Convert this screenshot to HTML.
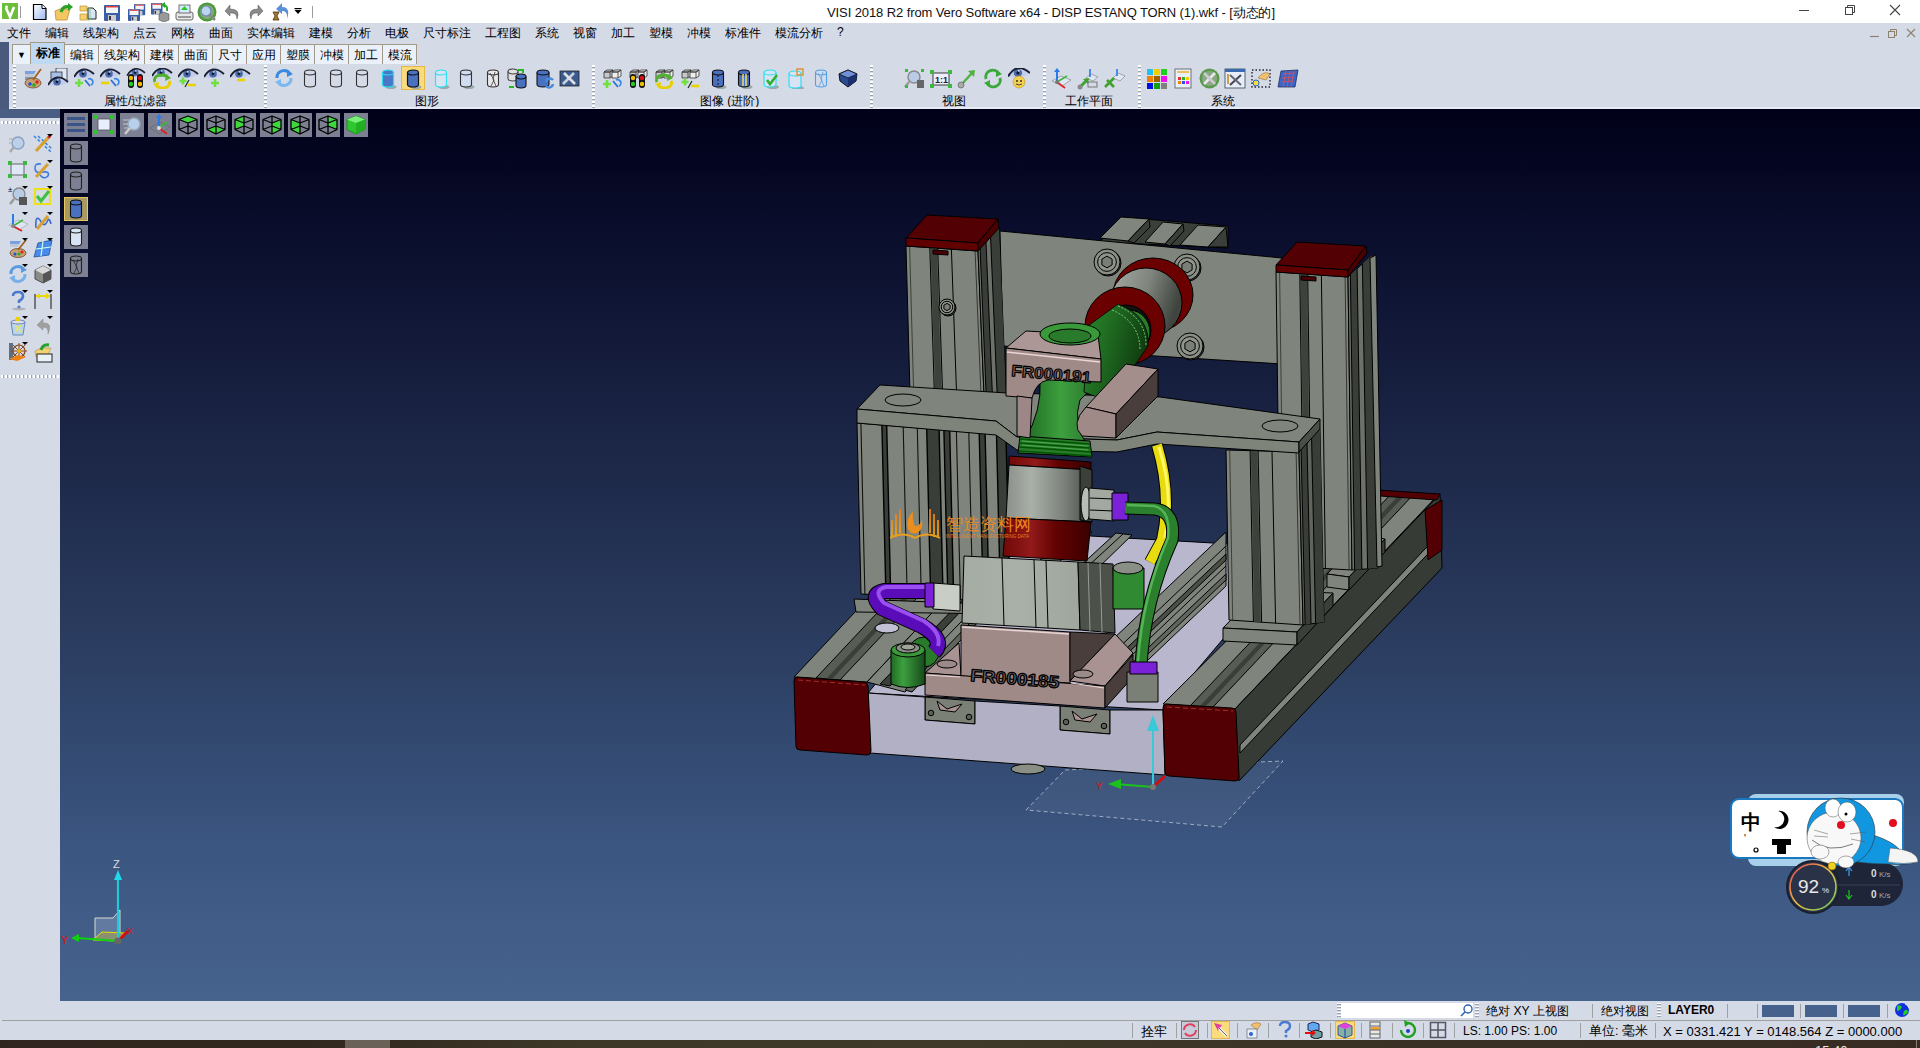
<!DOCTYPE html>
<html><head><meta charset="utf-8">
<style>
*{box-sizing:border-box}
html,body{margin:0;padding:0;width:1920px;height:1048px;overflow:hidden;background:#d5dae7;font-family:"Liberation Sans",sans-serif;color:#000}
.a{position:absolute}
#title{left:0;top:0;width:1920px;height:23px;background:#fff}
#ttext{left:827px;top:4px;font-size:13px;white-space:nowrap;color:#111;letter-spacing:-0.1px}
#menu{left:0;top:23px;width:1920px;height:19px;background:#d5dae7;font-size:12px}
#menu span{position:absolute;top:2px;white-space:nowrap}
#lstrip{left:0;top:42px;width:9px;height:76px;background:#4a5a7c}
#lband{left:0;top:109px;width:60px;height:9px;background:#4a5d82}
#tabs span{position:absolute;top:44px;height:20px;border:1px solid #a09a86;border-bottom:none;background:#eaf1fb;font-size:12px;padding-top:2px;text-align:center;white-space:nowrap}
#tabs span.sel{top:42px;height:22px;background:#bfd9f3;font-weight:bold}
#tb{left:9px;top:64px;width:1911px;height:45px;background:#d5dae7}
.lbl{position:absolute;top:93px;font-size:12px;white-space:nowrap}
.grip{position:absolute;width:3px;background:repeating-linear-gradient(#fff 0 2px,#a9adb8 2px 3px,transparent 3px 5px)}
#vp{left:60px;top:109px;width:1860px;height:892px;background:linear-gradient(#000018 0%,#0b0f2e 15%,#1b2545 37%,#2b3d60 60%,#3a5580 82%,#46638e 100%)}
#lp{left:0;top:118px;width:60px;height:883px;background:#d5dae7}
#sb1{left:0;top:1001px;width:1920px;height:20px;background:#d5dae7}
#sbl{left:2px;top:1020px;width:1918px;height:1px;background:#a0a0a0}
#sb2{left:0;top:1021px;width:1920px;height:19px;background:#d5dae7}
#task{left:0;top:1040px;width:1920px;height:8px;background:linear-gradient(to right,#30261f 0%,#33281f 18%,#3d3828 30%,#3f3a2a 50%,#3a3025 75%,#382c22 100%)}
.vi{position:absolute;width:24px;height:24px;background:#7d8094}
.sep{position:absolute;width:1px;background:#a0a0a0}
.st{position:absolute;font-size:12px;white-space:nowrap}
</style></head><body>
<div class="a" id="title"></div>
<div class="a" id="ttext">VISI 2018 R2 from Vero Software x64 - DISP ESTANQ TORN (1).wkf - [动态的]</div>
<div class="a" id="menu">
<span style="left:7px">文件</span><span style="left:45px">编辑</span><span style="left:83px">线架构</span><span style="left:133px">点云</span><span style="left:171px">网格</span><span style="left:209px">曲面</span><span style="left:247px">实体编辑</span><span style="left:309px">建模</span><span style="left:347px">分析</span><span style="left:385px">电极</span><span style="left:423px">尺寸标注</span><span style="left:485px">工程图</span><span style="left:535px">系统</span><span style="left:573px">视窗</span><span style="left:611px">加工</span><span style="left:649px">塑模</span><span style="left:687px">冲模</span><span style="left:725px">标准件</span><span style="left:775px">模流分析</span><span style="left:837px">?</span>
</div>
<div class="a" id="lstrip"></div>
<div class="a" id="tb"></div>
<div id="tabs">
<span style="left:12px;width:19px;font-size:9px;padding-top:5px">▼</span><span class="sel" style="left:30px;width:35px">标准</span><span style="left:64px;width:35px">编辑</span><span style="left:98px;width:47px">线架构</span><span style="left:144px;width:35px">建模</span><span style="left:178px;width:35px">曲面</span><span style="left:212px;width:35px">尺寸</span><span style="left:246px;width:35px">应用</span><span style="left:280px;width:35px">塑膜</span><span style="left:314px;width:35px">冲模</span><span style="left:348px;width:35px">加工</span><span style="left:382px;width:35px">模流</span>
</div>
<div class="lbl" style="left:104px">属性/过滤器</div>
<div class="lbl" style="left:415px">图形</div>
<div class="lbl" style="left:700px">图像 (进阶)</div>
<div class="lbl" style="left:942px">视图</div>
<div class="lbl" style="left:1065px">工作平面</div>
<div class="lbl" style="left:1211px">系统</div>
<div class="a" id="lband"></div>
<div class="a" style="left:9px;top:107px;width:1911px;height:2px;background:#e6eaf4"></div>
<div class="a" id="vp"></div>
<div class="a" id="lp"></div>
<div class="a" id="sb1"></div>
<div class="a" id="sbl"></div>
<div class="a" id="sb2"></div>
<div class="a" id="task"></div>
<svg class="a" style="left:0;top:0" width="1920" height="1048" viewBox="0 0 1920 1048">
<defs>
<linearGradient id="cylG" x1="0" x2="1" y1="0" y2="0"><stop offset="0" stop-color="#8b918a"/><stop offset="0.3" stop-color="#a9b0a8"/><stop offset="0.7" stop-color="#7a8079"/><stop offset="1" stop-color="#454a44"/></linearGradient>
<linearGradient id="cylR" x1="0" x2="1" y1="0" y2="0"><stop offset="0" stop-color="#700808"/><stop offset="0.32" stop-color="#921a1a"/><stop offset="0.6" stop-color="#620202"/><stop offset="1" stop-color="#3a0000"/></linearGradient>
<linearGradient id="grn" x1="0" x2="1" y1="0" y2="0"><stop offset="0" stop-color="#1f6a21"/><stop offset="0.35" stop-color="#3da03f"/><stop offset="1" stop-color="#17491a"/></linearGradient>
<linearGradient id="valve" x1="0" x2="1" y1="0" y2="0"><stop offset="0" stop-color="#a4aca3"/><stop offset="0.5" stop-color="#a8b0a7"/><stop offset="1" stop-color="#9ea69d"/></linearGradient>
</defs>
<polygon points="1026,810 1065,770 1283,761 1222,827" fill="rgba(255,255,255,0.05)" stroke="#b8c0d0" stroke-width="0.8" stroke-dasharray="4,3"/>
<g stroke="#000" stroke-width="1" stroke-linejoin="round">
<!-- fins -->
<polygon points="1100,242 1121,217 1228,226 1228,248" fill="#3b3f39"/>
<polygon points="1100,238 1121,217 1149,219 1128,241" fill="#80867d"/>
<polygon points="1128,241 1149,219 1150,227 1134,243" fill="#3b3f39"/>
<polygon points="1145,242 1163,222 1183,224 1165,244" fill="#80867d"/>
<polygon points="1165,244 1183,224 1184,231 1170,246" fill="#3b3f39"/>
<polygon points="1180,245 1198,225 1226,227 1208,247" fill="#80867d"/>
<polygon points="1208,247 1226,227 1228,247" fill="#3b3f39"/>
<!-- back plate -->
<polygon points="1000,231 1282,258 1282,364 1156,356 1003,346" fill="#7f857c"/>
<!-- left back post -->
<polygon points="906,246 978,251 984,395 910,393" fill="#7f857c"/>
<polygon points="978,251 999,228 1006,395 984,395" fill="#6c7169"/>
<line x1="909.6" y1="246.2" x2="913.7" y2="393.1" stroke="#2a2e28" stroke-width="0.8"/><polygon points="930.5,247.7 937.0,248.2 941.8,393.9 935.2,393.7" fill="#3e423c" stroke="none"/><line x1="929.8" y1="247.7" x2="934.4" y2="393.7" stroke="#000" stroke-width="1"/><line x1="937.7" y1="248.2" x2="942.6" y2="393.9" stroke="#000" stroke-width="1"/><line x1="951.4" y1="249.2" x2="956.6" y2="394.3" stroke="#000" stroke-width="1"/><line x1="975.1" y1="250.8" x2="981.0" y2="394.9" stroke="#222" stroke-width="0.8"/><polygon points="980.1,248.7 986.0,242.3 992.4,395.0 986.2,395.0" fill="#3a3e38" stroke="none"/><polygon points="990.6,237.2 999.0,228.0 1006.0,395.0 997.2,395.0" fill="#3a3e38" stroke="none"/><line x1="980.1" y1="248.7" x2="986.2" y2="395.0" stroke="#000" stroke-width="1"/><line x1="986.0" y1="242.3" x2="992.4" y2="395.0" stroke="#000" stroke-width="1"/><line x1="990.6" y1="237.2" x2="997.2" y2="395.0" stroke="#000" stroke-width="1"/>
<polygon points="906,238 927,215 998,219 978,243" fill="#520004"/>
<polygon points="933,250 948,251 948,255 933,254" fill="#4a0004"/>
<polygon points="906,238 978,243 978,251 906,246" fill="#600000"/>
<polygon points="978,243 998,219 999,228 978,251" fill="#4a0000"/>
<!-- bolts on back plate -->
<circle cx="1108" cy="263" r="13" fill="#3b3f39"/><circle cx="1107" cy="262" r="13" fill="#8a8f86"/><circle cx="1107" cy="262" r="9.36" fill="#90958c"/><polygon points="1112.1,264.9 1107.0,267.9 1101.9,264.9 1101.9,259.1 1107.0,256.1 1112.1,259.1" fill="#7a7f76"/>
<circle cx="1188" cy="268" r="13" fill="#3b3f39"/><circle cx="1187" cy="267" r="13" fill="#8a8f86"/><circle cx="1187" cy="267" r="9.36" fill="#90958c"/><polygon points="1192.1,269.9 1187.0,272.9 1181.9,269.9 1181.9,264.1 1187.0,261.1 1192.1,264.1" fill="#7a7f76"/>
<circle cx="1191" cy="347" r="13" fill="#3b3f39"/><circle cx="1190" cy="346" r="13" fill="#8a8f86"/><circle cx="1190" cy="346" r="9.36" fill="#90958c"/><polygon points="1195.1,348.9 1190.0,351.9 1184.9,348.9 1184.9,343.1 1190.0,340.1 1195.1,343.1" fill="#7a7f76"/>
<circle cx="948" cy="308" r="8" fill="#3b3f39"/><circle cx="947" cy="307" r="8" fill="#8a8f86"/><circle cx="947" cy="307" r="5.76" fill="#90958c"/><polygon points="950.1,308.8 947.0,310.6 943.9,308.8 943.9,305.2 947.0,303.4 950.1,305.2" fill="#7a7f76"/>
<circle cx="1316" cy="335" r="8" fill="#3b3f39"/><circle cx="1315" cy="334" r="8" fill="#8a8f86"/><circle cx="1315" cy="334" r="5.76" fill="#90958c"/><polygon points="1318.1,335.8 1315.0,337.6 1311.9,335.8 1311.9,332.2 1315.0,330.4 1318.1,332.2" fill="#7a7f76"/>
<!-- cylinder mount -->
<ellipse cx="1153" cy="295" rx="40" ry="37" fill="#6a0000"/>
<defs><linearGradient id="mnt" x1="0" y1="0" x2="1" y2="0.3"><stop offset="0" stop-color="#a6aca4"/><stop offset="0.55" stop-color="#7f857d"/><stop offset="1" stop-color="#3f443e"/></linearGradient></defs>
<ellipse cx="1146" cy="303" rx="36" ry="35" fill="url(#mnt)"/>
<ellipse cx="1125" cy="326" rx="40" ry="39" fill="#6a0000"/>
<ellipse cx="1126" cy="330" rx="25" ry="25" fill="#111"/>
<ellipse cx="1129" cy="332" rx="21" ry="22" fill="#2c7a2c"/>
<!-- base plate lavender top -->
<polygon points="868,693 1003,531 1300,548 1163,710" fill="#b9b7cd"/>
<polygon points="1078,568 1116,533 1132,535 1096,570" fill="#7f857c"/>
<line x1="1086" y1="568" x2="1123" y2="534" stroke="#000"/>
<polygon points="1040,560 1075,530 1092,532 1058,563" fill="#7f857c"/>
<!-- left rail -->
<polygon points="794,677 867,682 960,583 887,578" fill="#7f857c"/>
<polygon points="816,678 840,680 933,581 909,579" fill="#575c54"/>
<polygon points="826,679 832,679 925,580 919,580" fill="#3b3f39" stroke="none"/>
<!-- right rail -->
<polygon points="1163,704 1235,709 1437,496 1378,490" fill="#7f857c"/>
<polygon points="1190,706 1213,707 1413,495 1392,493" fill="#575c54"/>
<polygon points="1200,706 1206,706 1406,494 1400,494" fill="#3b3f39" stroke="none"/>
<polygon points="1235,709 1239,781 1442,568 1440,494" fill="#363b36"/>
<polygon points="1240,745 1441,532 1441,540 1240,753" fill="#7f857c"/>
<polygon points="1378,490 1440,494 1437,500 1380,496" fill="#520004"/>
<polygon points="1425,510 1442,500 1442,550 1428,560" fill="#520004"/>
<polygon points="1327,574 1364,536 1385,539 1349,577" fill="#7f857c"/>
<polygon points="1327,574 1349,577 1349,590 1327,587" fill="#7f857c"/>
<polygon points="1349,577 1385,539 1385,552 1349,590" fill="#3b3f39"/>
<!-- right back post -->
<polygon points="1276,272 1348,277 1352,570 1280,566" fill="#7f857c"/>
<polygon points="1348,277 1372,255 1378,568 1352,570" fill="#6c7169"/>
<line x1="1279.6" y1="272.2" x2="1283.6" y2="566.2" stroke="#2a2e28" stroke-width="0.8"/><polygon points="1300.5,273.7 1307.0,274.1 1311.0,567.7 1304.5,567.4" fill="#3e423c" stroke="none"/><line x1="1299.8" y1="273.6" x2="1303.8" y2="567.3" stroke="#000" stroke-width="1"/><line x1="1307.7" y1="274.2" x2="1311.7" y2="567.8" stroke="#000" stroke-width="1"/><line x1="1321.4" y1="275.1" x2="1325.4" y2="568.5" stroke="#000" stroke-width="1"/><line x1="1345.1" y1="276.8" x2="1349.1" y2="569.8" stroke="#222" stroke-width="0.8"/><polygon points="1350.4,274.8 1357.1,268.6 1361.9,569.2 1354.6,569.8" fill="#3a3e38" stroke="none"/><polygon points="1362.4,263.8 1372.0,255.0 1378.0,568.0 1367.6,568.8" fill="#3a3e38" stroke="none"/><line x1="1350.4" y1="274.8" x2="1354.6" y2="569.8" stroke="#000" stroke-width="1"/><line x1="1357.1" y1="268.6" x2="1361.9" y2="569.2" stroke="#000" stroke-width="1"/><line x1="1362.4" y1="263.8" x2="1367.6" y2="568.8" stroke="#000" stroke-width="1"/>
<polygon points="1370,258 1376,255 1382,566 1377,567" fill="#7f857c"/>
<polygon points="1276,265 1297,242 1366,246 1348,270" fill="#520004"/>
<polygon points="1301,276 1316,277 1316,281 1301,280" fill="#4a0004"/>
<polygon points="1276,265 1348,270 1348,277 1276,272" fill="#600000"/>
<polygon points="1348,270 1366,246 1367,253 1348,277" fill="#4a0000"/>
<polygon points="1223,628 1260,590 1333,593 1297,632" fill="#7f857c"/>
<polygon points="1223,628 1297,632 1297,645 1223,641" fill="#7f857c"/>
<polygon points="1297,632 1333,593 1333,606 1297,645" fill="#3b3f39"/>
<!-- right inner rail -->
<polygon points="1110,642 1226,532 1226,586 1110,696" fill="#7f857c"/>
<line x1="1110" y1="656" x2="1226" y2="546" stroke="#000"/>
<polygon points="1110,664 1226,554 1226,560 1110,670" fill="#4a4f48"/>
<line x1="1110" y1="676" x2="1226" y2="566" stroke="#000"/>
<polygon points="1110,684 1226,574 1226,580 1110,690" fill="#60655d"/>
<!-- left inner area rails -->
<polygon points="867,682 960,583 1012,590 905,692" fill="#7f857c"/>
<polygon points="880,684 972,590 980,591 890,686" fill="#3b3f39"/>
<line x1="898" y1="687" x2="990" y2="592" stroke="#000"/>
<polygon points="905,690 1000,592 1006,592 912,692" fill="#60655d"/>
<ellipse cx="887" cy="628" rx="12" ry="5" fill="#c2c0d4"/>
<!-- left lower posts -->
<polygon points="857,423 1006,435 1010,602 861,594" fill="#7f857c"/>
<polygon points="881.9,425.0 886.7,425.4 890.7,595.6 885.9,595.3" fill="#3a3e38" stroke="none"/><line x1="881.9" y1="425.0" x2="885.9" y2="595.3" stroke="#000" stroke-width="1.4"/><line x1="886.7" y1="425.4" x2="890.7" y2="595.6" stroke="#000" stroke-width="1.4"/><polygon points="926.7,428.6 939.1,429.6 943.1,598.4 930.7,597.7" fill="#3a3e38" stroke="none"/><line x1="926.7" y1="428.6" x2="930.7" y2="597.7" stroke="#000" stroke-width="1.4"/><line x1="939.1" y1="429.6" x2="943.1" y2="598.4" stroke="#000" stroke-width="1.4"/><polygon points="943.9,430.0 949.7,430.5 953.7,599.0 947.9,598.7" fill="#3a3e38" stroke="none"/><line x1="943.9" y1="430.0" x2="947.9" y2="598.7" stroke="#000" stroke-width="1.4"/><line x1="949.7" y1="430.5" x2="953.7" y2="599.0" stroke="#000" stroke-width="1.4"/><polygon points="979.2,432.8 985.1,433.3 989.1,600.9 983.2,600.6" fill="#3a3e38" stroke="none"/><line x1="979.2" y1="432.8" x2="983.2" y2="600.6" stroke="#000" stroke-width="1.4"/><line x1="985.1" y1="433.3" x2="989.1" y2="600.9" stroke="#000" stroke-width="1.4"/><polygon points="996.5,434.2 1006.0,435.0 1010.0,602.0 1000.5,601.5" fill="#3a3e38" stroke="none"/><line x1="996.5" y1="434.2" x2="1000.5" y2="601.5" stroke="#000" stroke-width="1.4"/><line x1="1006.0" y1="435.0" x2="1010.0" y2="602.0" stroke="#000" stroke-width="1.4"/><line x1="860.9" y1="423.3" x2="864.9" y2="594.2" stroke="#111" stroke-width="1.1"/><line x1="903.2" y1="426.7" x2="907.2" y2="596.5" stroke="#111" stroke-width="1.1"/><line x1="917.3" y1="427.9" x2="921.3" y2="597.2" stroke="#111" stroke-width="1.1"/><line x1="956.4" y1="431.0" x2="960.4" y2="599.3" stroke="#111" stroke-width="1.1"/><line x1="968.8" y1="432.0" x2="972.8" y2="600.0" stroke="#111" stroke-width="1.1"/>
<polygon points="854,599 1010,605 1012,614 856,612" fill="#7f857c"/>
<!-- right lower post -->
<polygon points="1226,450 1299,452 1303,625 1229,620" fill="#7f857c"/>
<polygon points="1299,452 1320,429 1324,622 1303,625" fill="#5f645c"/>
<line x1="1229.7" y1="450.1" x2="1232.7" y2="620.2" stroke="#2a2e28" stroke-width="0.8"/><polygon points="1250.8,450.7 1257.4,450.9 1260.8,622.1 1254.2,621.7" fill="#3e423c" stroke="none"/><line x1="1250.1" y1="450.7" x2="1253.4" y2="621.6" stroke="#000" stroke-width="1"/><line x1="1258.1" y1="450.9" x2="1261.6" y2="622.2" stroke="#000" stroke-width="1"/><line x1="1272.0" y1="451.3" x2="1275.6" y2="623.1" stroke="#000" stroke-width="1"/><line x1="1296.1" y1="451.9" x2="1300.0" y2="624.8" stroke="#222" stroke-width="0.8"/><polygon points="1301.1,449.7 1307.0,443.3 1311.0,623.9 1305.1,624.7" fill="#3a3e38" stroke="none"/><polygon points="1311.6,438.2 1320.0,429.0 1324.0,622.0 1315.6,623.2" fill="#3a3e38" stroke="none"/><line x1="1301.1" y1="449.7" x2="1305.1" y2="624.7" stroke="#000" stroke-width="1"/><line x1="1307.0" y1="443.3" x2="1311.0" y2="623.9" stroke="#000" stroke-width="1"/><line x1="1311.6" y1="438.2" x2="1315.6" y2="623.2" stroke="#000" stroke-width="1"/>

<!-- middle plate -->
<polygon points="857,409 880,385 1007,393 1160,397 1320,419 1299,442 1157,432 1117,440 1017,437 996,421" fill="#7f857c"/>
<polygon points="857,409 996,421 1017,437 1117,440 1157,432 1299,442 1299,453 1157,444 1117,452 1017,450 996,435 857,423" fill="#7f847b"/>
<polygon points="1299,442 1320,419 1320,429 1299,452" fill="#4a4f48"/>
<ellipse cx="903" cy="400" rx="18" ry="6" fill="none"/>
<ellipse cx="1280" cy="426" rx="18" ry="6" fill="none"/>
<!-- green pipe body -->
<path d="M1040,380 Q1042,410 1025,440 L1088,446 Q1072,425 1080,400 L1128,352 L1112,318 L1075,345 Z" fill="url(#grn)"/>
<defs><linearGradient id="grn2" x1="0" x2="1" y1="0" y2="0.4"><stop offset="0" stop-color="#2a8a2c"/><stop offset="0.45" stop-color="#1f6a21"/><stop offset="1" stop-color="#0f3a10"/></linearGradient></defs>
<path d="M1088,326 L1118,304 Q1150,316 1148,346 L1110,402 L1084,392 Z" fill="url(#grn2)" stroke="#000" stroke-width="0.8"/>
<path d="M1118,306 Q1146,318 1146,345" fill="none" stroke="#7ad07a" stroke-width="1" stroke-dasharray="2,1.5"/>
<path d="M1112,310 Q1140,322 1140,350" fill="none" stroke="#7ad07a" stroke-width="1" stroke-dasharray="2,1.5"/>
<polygon points="1020,436 1090,441 1092,457 1018,453" fill="#2a7a2c"/>
<path d="M1020,439 L1090,444 M1019,443 L1091,448 M1019,447 L1091,452 M1019,451 L1092,456" stroke="#050" stroke-width="1.6"/>
<path d="M1022,441 L1088,446 M1022,445 L1088,450" stroke="#5ab85a" stroke-width="0.8"/>
<!-- pink block 1 -->
<polygon points="1006,348 1026,331 1098,335 1101,359" fill="#ad9796"/>
<path d="M1006,348 L1101,359 L1101,382 L1048,380 Q1036,382 1032,398 L1006,396 Z" fill="#9f8a88"/>
<polygon points="1017,396 1032,398 1030,438 1017,436" fill="#9c8786"/>
<line x1="1007" y1="352" x2="1100" y2="362" stroke="#e8d6d6" stroke-width="1.5"/>
<text x="1011" y="376" font-family="Liberation Sans" font-weight="bold" font-size="16" fill="#7a6666" stroke="#000" stroke-width="1.1" transform="rotate(5 1011 376)" textLength="80" lengthAdjust="spacingAndGlyphs">FR000191</text>
<!-- green ring top -->
<ellipse cx="1070" cy="334" rx="30" ry="11" fill="#3a9a3a"/>
<ellipse cx="1070" cy="336" rx="21" ry="7" fill="#2a7a2c"/>
<!-- pink block 2 (slanted) -->
<polygon points="1086,407 1126,364 1158,369 1116,414" fill="#a38e8c"/>
<path d="M1086,407 L1116,414 L1116,438 L1082,436 Q1070,424 1086,407Z" fill="#9f8a88"/>
<polygon points="1116,414 1158,369 1158,396 1116,438" fill="#4a3e3c"/>
<!-- cylinder red/grey -->
<polygon points="1009,456 1091,462 1091,470 1009,465" fill="url(#cylR)"/>
<polygon points="1009,465 1091,470 1091,522 1006,518" fill="url(#cylG)"/>
<polygon points="1006,518 1091,522 1087,561 1003,556" fill="url(#cylR)"/>
<!-- valve body -->
<polygon points="964,556 1078,562 1080,630 962,623" fill="url(#valve)"/>
<polygon points="1078,562 1113,564 1115,633 1080,630" fill="#4c5149"/>
<line x1="1002" y1="558" x2="1004" y2="626"/><line x1="1034" y1="560" x2="1036" y2="628"/><line x1="1046" y1="560" x2="1048" y2="628"/>
<line x1="1088" y1="563" x2="1090" y2="631" stroke="#999"/><line x1="1100" y1="563" x2="1102" y2="632" stroke="#999"/>
<!-- right fitting on cylinder -->
<polygon points="1080,466 1092,470 1092,522 1080,520" fill="#3b403a"/>
<ellipse cx="1086" cy="504" rx="5" ry="17" fill="#b8bdb6"/>
<polygon points="1089,488 1114,490 1114,521 1089,519" fill="#a3a9a1"/>
<line x1="1090" y1="498" x2="1114" y2="499" stroke="#000"/><line x1="1090" y1="510" x2="1114" y2="511" stroke="#000"/>
<rect x="1112" y="493" width="16" height="27" fill="#7b22d8"/>
<!-- yellow tube -->
<path d="M1157,445 Q1172,495 1162,540 L1150,562" fill="none" stroke="#000" stroke-width="12"/>
<path d="M1157,445 Q1172,495 1162,540 L1150,562" fill="none" stroke="#e8dc10" stroke-width="10"/>
<path d="M1159,447 Q1174,495 1165,538" fill="none" stroke="#fff860" stroke-width="3"/>
<!-- green fitting right -->
<polygon points="1113,568 1144,568 1144,609 1113,609" fill="#2f8a31"/>
<ellipse cx="1128" cy="568" rx="15" ry="6" fill="#8a8f86"/>
<!-- green tube -->
<path d="M1125,508 L1155,509 Q1176,512 1172,540 Q1145,600 1141,665" fill="none" stroke="#000" stroke-width="13"/>
<path d="M1125,508 L1155,509 Q1176,512 1172,540 Q1145,600 1141,665" fill="none" stroke="#2a802c" stroke-width="11"/>
<path d="M1127,505 L1154,506 Q1171,510 1168,538 Q1142,598 1138,662" fill="none" stroke="#55b455" stroke-width="2.5"/>
<!-- lower pink block -->
<polygon points="925,673 959,643 961,676" fill="#a99392"/>
<polygon points="961,625 1070,632 1070,683 961,676" fill="#9f8a88"/>
<polygon points="1070,632 1115,634 1070,681" fill="#4a3e3c"/>
<polygon points="1070,681 1115,634 1133,653 1105,686" fill="#a99392"/>
<polygon points="925,673 1105,686 1105,708 925,695" fill="#9f8a88"/>
<polygon points="1105,686 1133,655 1133,677 1105,708" fill="#4a3e3c"/>
<text x="970" y="681" font-family="Liberation Sans" font-weight="bold" font-size="17" fill="#7a6666" stroke="#000" stroke-width="1.2" transform="rotate(4.5 970 681)" textLength="89" lengthAdjust="spacingAndGlyphs">FR000185</text>
<line x1="962" y1="627" x2="1069" y2="634" stroke="#e8d6d6" stroke-width="1.5"/>
<line x1="926" y1="675" x2="960" y2="677" stroke="#e8d6d6" stroke-width="1.2"/>
<line x1="1071" y1="683" x2="1104" y2="688" stroke="#e8d6d6" stroke-width="1.2"/>
<ellipse cx="947" cy="664" rx="10" ry="4" fill="#9a8a8a"/><ellipse cx="1083" cy="674" rx="10" ry="4" fill="#9a8a8a"/>
<!-- brackets -->
<polygon points="925,697 975,701 975,724 925,720" fill="#7b8077"/>
<polygon points="937,701 947,709 962,704 955,712 940,710" fill="#a99392"/>
<circle cx="931" cy="713" r="2.8" fill="#5a5f57"/><circle cx="969" cy="717" r="2.8" fill="#5a5f57"/>
<polygon points="1060,706 1110,710 1110,734 1060,730" fill="#7b8077"/>
<polygon points="1072,711 1082,719 1097,714 1090,722 1075,720" fill="#a99392"/>
<circle cx="1066" cy="722" r="2.8" fill="#5a5f57"/><circle cx="1104" cy="726" r="2.8" fill="#5a5f57"/>
<!-- left green elbow + purple tube -->
<ellipse cx="924" cy="652" rx="15" ry="15" fill="#2a7a2c"/>
<path d="M891,650 L925,650 L925,684 Q908,691 891,684 Z" fill="url(#grn)"/>
<ellipse cx="908" cy="650" rx="17" ry="7" fill="#3a9a3a"/>
<ellipse cx="908" cy="648" rx="12" ry="5" fill="#8a8f86"/>
<ellipse cx="908" cy="647" rx="7" ry="3" fill="#a0a59c"/>
<path d="M930,591 L885,591 Q868,594 882,608 L922,626 Q946,640 934,652" fill="none" stroke="#000" stroke-width="16"/>
<path d="M930,591 L885,591 Q868,594 882,608 L922,626 Q946,640 934,652" fill="none" stroke="#5a0cb8" stroke-width="14"/>
<path d="M928,587 L886,587 Q872,590 884,603 L924,621 Q942,633 938,646" fill="none" stroke="#9a50f0" stroke-width="4"/>
<polygon points="933,583 960,585 960,611 933,609" fill="#c8cdc6"/>
<rect x="925" y="583" width="9" height="24" fill="#7b22d8"/>
<!-- right nut bottom -->
<polygon points="1127,672 1158,672 1158,702 1127,702" fill="#7b8077"/>
<rect x="1130" y="662" width="27" height="12" fill="#7b22d8"/>
<!-- lavender front face -->
<polygon points="868,693 925,697 925,720 975,724 975,701 1060,706 1060,730 1110,734 1110,710 1163,710 1165,775 870,753" fill="#b1b0c4"/>
<ellipse cx="1028" cy="769" rx="17" ry="5" fill="#8a8f86"/>
<!-- right red cap -->
<path d="M1166,704 L1232,708 Q1236,708 1236,712 L1239,777 Q1239,781 1235,781 L1169,776 Q1165,776 1165,772 L1163,708 Q1163,704 1166,704Z" fill="#520004"/>
<line x1="1167" y1="707" x2="1233" y2="711" stroke="#a03030" stroke-width="1" stroke-dasharray="5,3"/>
<!-- left red cap -->
<path d="M797,677 L864,682 Q868,682 868,686 L871,751 Q871,755 867,755 L800,750 Q796,750 796,746 L794,681 Q794,677 797,677Z" fill="#520004"/>
<line x1="798" y1="680" x2="865" y2="685" stroke="#a03030" stroke-width="1" stroke-dasharray="5,3"/>
</g>
<!-- dashed plane + axes -->
<line x1="1153" y1="787" x2="1153" y2="725" stroke="#38c8d8" stroke-width="2"/>
<polygon points="1147,731 1153,715 1159,731" fill="#38c8d8"/>
<line x1="1153" y1="787" x2="1115" y2="784" stroke="#1cc21c" stroke-width="2"/>
<polygon points="1121,779 1108,784 1121,789" fill="#1cc21c"/>
<line x1="1153" y1="787" x2="1165" y2="776" stroke="#d01010" stroke-width="3"/>
<circle cx="1153" cy="787" r="3" fill="#777"/>
<text x="1096" y="790" font-size="10" font-family="Liberation Sans" fill="#e01010">Y</text>
<g opacity="0.95">
<defs><linearGradient id="og" x1="0" y1="0" x2="0" y2="1"><stop offset="0" stop-color="#f07818"/><stop offset="1" stop-color="#f0a818"/></linearGradient></defs>
<path d="M892,537 V520 M896,537 V514 M900,533 V509 M930,533 V509 M934,537 V514 M938,537 V520" stroke="url(#og)" stroke-width="1.8" fill="none"/>
<path d="M890,538 Q903,531 915,538 Q927,531 940,538" stroke="#f0a018" stroke-width="1.8" fill="none"/>
<path d="M913,511 Q905,520 908,529 Q911,535 917,533 Q924,529 922,520 Q919,527 915,526 Q912,520 913,511Z" fill="#f09018"/>
<text x="946" y="530" font-size="17" fill="#f08a20" font-family="Liberation Sans">智造资料网</text>
<text x="946" y="538" font-size="4.6" fill="#f08a20" font-family="Liberation Sans" textLength="83" lengthAdjust="spacingAndGlyphs">INTELLIGENT MANUFACTURING DATA</text>
</g>
</svg>

<svg class="a" style="left:2px;top:3px" width="17" height="17" viewBox="0 0 17 17"><rect x="0" y="0" width="16" height="16" fill="#6cbd3c"/><path d="M4,5 L8,14 L12,4" fill="none" stroke="#fff" stroke-width="2.6"/><circle cx="4.5" cy="4" r="1.4" fill="#fff"/></svg>
<div class="a" style="left:20px;top:6px;width:1px;height:12px;background:#9a9a9a"></div>
<svg class="a" style="left:32px;top:3px" width="16" height="18" viewBox="0 0 16 18"><path d="M1.5,1.5 H10 L14,5.5 V16.5 H1.5Z" fill="url(#pg)" stroke="#000" stroke-width="1.2"/><path d="M10,1.5 V5.5 H14" fill="#fff" stroke="#000"/><defs><linearGradient id="pg" x1="0" y1="0" x2="1" y2="1"><stop offset="0" stop-color="#fff"/><stop offset="1" stop-color="#9ab8f0"/></linearGradient></defs></svg>
<svg class="a" style="left:54px;top:3px" width="20" height="19" viewBox="0 0 20 19"><path d="M1,8 L6,6 H16 L13,17 H2Z" fill="#f3c863" stroke="#c09030" stroke-width="0.8"/><path d="M7,9 Q9,2 16,4" fill="none" stroke="#2aa02a" stroke-width="3.2"/><polygon points="14,0 19,4 14,8" fill="#2aa02a"/></svg>
<svg class="a" style="left:79px;top:3px" width="19" height="19" viewBox="0 0 19 19"><path d="M1,3 H8 V8 H1Z M1,11 H8 V17 H1Z" fill="#f3d070" stroke="#c8a040" stroke-width="0.8"/><path d="M9,5 H14 L17,8 V16 H9Z" fill="#d8e4f8" stroke="#222" stroke-width="1"/><path d="M8,5 H11 V17 H8" fill="none" stroke="#6c6" stroke-width="0.8"/></svg>
<svg class="a" style="left:103px;top:4px" width="18" height="18" viewBox="0 0 18 18"><g transform="translate(1,1) scale(1)"><rect x="0" y="0" width="16" height="16" rx="1" fill="#3b5ea8"/><rect x="2" y="1" width="12" height="7" fill="#f4f4f4"/><rect x="2" y="1" width="12" height="1.5" fill="#e04040"/><rect x="4" y="10" width="8" height="6" fill="#ccc"/><rect x="5" y="11" width="2" height="4" fill="#334"/></g></svg>
<svg class="a" style="left:127px;top:3px" width="19" height="19" viewBox="0 0 19 19"><g transform="translate(7,1) scale(0.7)"><rect x="0" y="0" width="16" height="16" rx="1" fill="#3b5ea8"/><rect x="2" y="1" width="12" height="7" fill="#f4f4f4"/><rect x="2" y="1" width="12" height="1.5" fill="#e04040"/><rect x="4" y="10" width="8" height="6" fill="#ccc"/><rect x="5" y="11" width="2" height="4" fill="#334"/></g><g transform="translate(1,6) scale(0.75)"><rect x="0" y="0" width="16" height="16" rx="1" fill="#3b5ea8"/><rect x="2" y="1" width="12" height="7" fill="#f4f4f4"/><rect x="2" y="1" width="12" height="1.5" fill="#e04040"/><rect x="4" y="10" width="8" height="6" fill="#ccc"/><rect x="5" y="11" width="2" height="4" fill="#334"/></g></svg>
<svg class="a" style="left:150px;top:2px" width="20" height="20" viewBox="0 0 20 20"><g transform="translate(1,1) scale(0.72)"><rect x="0" y="0" width="16" height="16" rx="1" fill="#3b5ea8"/><rect x="2" y="1" width="12" height="7" fill="#f4f4f4"/><rect x="2" y="1" width="12" height="1.5" fill="#e04040"/><rect x="4" y="10" width="8" height="6" fill="#ccc"/><rect x="5" y="11" width="2" height="4" fill="#334"/></g><path d="M13,3 Q18,3 17,9" fill="none" stroke="#2a2" stroke-width="2"/><polygon points="11,3 15,0 15,6" fill="#2a2"/><path d="M9,12 L14,10 L19,12 V18 L14,20 L9,18Z" fill="#999" stroke="#555" stroke-width="0.6"/></svg>
<svg class="a" style="left:175px;top:4px" width="19" height="18" viewBox="0 0 19 18"><rect x="1" y="8" width="17" height="8" rx="2" fill="#e8e8e8" stroke="#666"/><rect x="4" y="1" width="11" height="8" fill="#d8e8ff" stroke="#555" stroke-width="0.8"/><polygon points="9.5,2 13,6 6,6" fill="#2c2"/><rect x="3" y="12" width="13" height="2" fill="#999"/></svg>
<svg class="a" style="left:197px;top:2px" width="21" height="21" viewBox="0 0 21 21"><circle cx="10" cy="10" r="9.5" fill="#4f9a3a"/><circle cx="10" cy="10" r="7" fill="#86aa80"/><circle cx="9" cy="9" r="5" fill="#bcd4f0" stroke="#6a8ab0" stroke-width="1.2"/><path d="M12.5,12.5 L18,18" stroke="#888" stroke-width="2.5"/></svg>
<svg class="a" style="left:224px;top:3px" width="17" height="18" viewBox="0 0 17 18"><path d="M6,2 L1,8 L6,13 V10 Q13,9 13,16 Q17,6 6,6Z" fill="#8a8a8a" stroke="#666" stroke-width="0.6"/></svg>
<svg class="a" style="left:247px;top:3px" width="17" height="18" viewBox="0 0 17 18"><path d="M11,2 L16,8 L11,13 V10 Q4,9 4,16 Q0,6 11,6Z" fill="#8a8a8a" stroke="#666" stroke-width="0.6"/></svg>
<svg class="a" style="left:270px;top:2px" width="20" height="21" viewBox="0 0 20 21"><path d="M12,1 L6,7 L12,12 V9 Q18,9 17,17 Q21,5 12,5Z" fill="#5a90d8"/><path d="M3,10 H9 L7,14 L9,18 H3 L5,14Z" fill="#a07a30" stroke="#503010" stroke-width="0.8"/></svg>
<svg class="a" style="left:294px;top:8px" width="9" height="6" viewBox="0 0 9 6"><rect x="0.5" y="0" width="7" height="1.2" fill="#000"/><polygon points="0.5,2 7.5,2 4,6" fill="#000"/></svg>
<div class="a" style="left:312px;top:6px;width:1px;height:12px;background:#9a9a9a"></div>
<svg class="a" style="left:1794px;top:0px" width="20" height="20" viewBox="0 0 20 20"><line x1="5" y1="10.5" x2="15" y2="10.5" stroke="#444" stroke-width="1"/></svg>
<svg class="a" style="left:1840px;top:0px" width="20" height="20" viewBox="0 0 20 20"><rect x="5.5" y="7.5" width="7" height="7" fill="none" stroke="#444"/><path d="M7.5,7.5 V5.5 H14.5 V12.5 H12.5" fill="none" stroke="#444"/></svg>
<svg class="a" style="left:1885px;top:0px" width="20" height="20" viewBox="0 0 20 20"><path d="M5,5 L15,15 M15,5 L5,15" stroke="#444" stroke-width="1.1"/></svg>
<svg class="a" style="left:1868px;top:26px" width="14" height="14" viewBox="0 0 14 14"><line x1="2" y1="10.5" x2="11" y2="10.5" stroke="#8c826e" stroke-width="1.2"/></svg>
<svg class="a" style="left:1886px;top:26px" width="14" height="14" viewBox="0 0 14 14"><rect x="2.5" y="5.5" width="6" height="6" fill="none" stroke="#8c826e"/><path d="M4.5,5.5 V3.5 H10.5 V9.5 H8.5" fill="none" stroke="#8c826e"/></svg>
<svg class="a" style="left:1904px;top:26px" width="14" height="14" viewBox="0 0 14 14"><path d="M3,3 L11,11 M11,3 L3,11" stroke="#8c826e" stroke-width="1.1"/></svg>
<div class="a" style="left:13px;top:65px;width:3px;height:43px;background:repeating-linear-gradient(to bottom,#fff 0 2px,#9aa0ad 2px 3px,transparent 3px 4px)"></div>
<div class="a" style="left:264px;top:65px;width:3px;height:43px;background:repeating-linear-gradient(to bottom,#fff 0 2px,#9aa0ad 2px 3px,transparent 3px 4px)"></div>
<div class="a" style="left:592px;top:65px;width:3px;height:43px;background:repeating-linear-gradient(to bottom,#fff 0 2px,#9aa0ad 2px 3px,transparent 3px 4px)"></div>
<div class="a" style="left:870px;top:65px;width:3px;height:43px;background:repeating-linear-gradient(to bottom,#fff 0 2px,#9aa0ad 2px 3px,transparent 3px 4px)"></div>
<div class="a" style="left:1043px;top:65px;width:3px;height:43px;background:repeating-linear-gradient(to bottom,#fff 0 2px,#9aa0ad 2px 3px,transparent 3px 4px)"></div>
<div class="a" style="left:1138px;top:65px;width:3px;height:43px;background:repeating-linear-gradient(to bottom,#fff 0 2px,#9aa0ad 2px 3px,transparent 3px 4px)"></div>
<svg class="a" style="left:23px;top:68px" width="20" height="21" viewBox="0 0 20 21"><path d="M2,3 H13 L11,6 H2Z" fill="#7aa0e0"/><path d="M2,6 H12 L10,9 H2Z" fill="#c0c8d8"/><path d="M2,9 H11 V12 H2Z" fill="#9098a8"/><ellipse cx="10" cy="15" rx="8" ry="5" fill="#c8a070" stroke="#6a4a2a" stroke-width="0.8"/><circle cx="7" cy="16" r="1.8" fill="#2050e0"/><circle cx="11" cy="17" r="1.8" fill="#20b020"/><circle cx="14" cy="14" r="1.8" fill="#e02020"/><path d="M10,12 L18,1" stroke="#a06020" stroke-width="1.8"/></svg>
<svg class="a" style="left:48px;top:68px" width="21" height="21" viewBox="0 0 21 21"><rect x="8" y="0" width="11" height="14" fill="#dde8f8" stroke="#333" stroke-width="0.8"/><rect x="3" y="4" width="11" height="12" fill="#a8c0e8" stroke="#333" stroke-width="0.8"/><path d="M0.0,17.0 Q8.0,4.0 20.0,14.0 Q12.0,20.0 0.0,17.0Z" fill="#c4ccec"/><circle cx="9.0" cy="13.8" r="3.8" fill="#4a6aa8"/><circle cx="9.0" cy="13.8" r="1.4" fill="#10182a"/><circle cx="9.8" cy="11.8" r="0.9" fill="#cde"/><path d="M0.0,17.0 Q8.0,3.5 20.0,14.0" fill="none" stroke="#1a2030" stroke-width="1.8"/></svg>
<svg class="a" style="left:74px;top:68px" width="21" height="21" viewBox="0 0 21 21"><path d="M0.0,9.0 Q8.0,-4.0 20.0,6.0 Q12.0,12.0 0.0,9.0Z" fill="#c4ccec"/><circle cx="9.0" cy="5.8" r="3.8" fill="#4a6aa8"/><circle cx="9.0" cy="5.8" r="1.4" fill="#10182a"/><circle cx="9.8" cy="3.8" r="0.9" fill="#cde"/><path d="M0.0,9.0 Q8.0,-4.5 20.0,6.0" fill="none" stroke="#1a2030" stroke-width="1.8"/><path d="M1,15 H9 M5,11 V19" stroke="#70e040" stroke-width="2.6"/><path d="M11,12 L16,18" stroke="#2a70d8" stroke-width="1.8"/><path d="M14,11 A3.2,3.2 0 1 1 17,17" fill="none" stroke="#3a88e8" stroke-width="1.8"/></svg>
<svg class="a" style="left:100px;top:68px" width="21" height="21" viewBox="0 0 21 21"><path d="M0.0,9.0 Q8.0,-4.0 20.0,6.0 Q12.0,12.0 0.0,9.0Z" fill="#c4ccec"/><circle cx="9.0" cy="5.8" r="3.8" fill="#4a6aa8"/><circle cx="9.0" cy="5.8" r="1.4" fill="#10182a"/><circle cx="9.8" cy="3.8" r="0.9" fill="#cde"/><path d="M0.0,9.0 Q8.0,-4.5 20.0,6.0" fill="none" stroke="#1a2030" stroke-width="1.8"/><path d="M1,15 H9" stroke="#e8d400" stroke-width="2.6"/><path d="M11,12 L16,18" stroke="#2a70d8" stroke-width="1.8"/><path d="M14,11 A3.2,3.2 0 1 1 17,17" fill="none" stroke="#3a88e8" stroke-width="1.8"/></svg>
<svg class="a" style="left:126px;top:68px" width="21" height="21" viewBox="0 0 21 21"><path d="M1.0,7.6 Q8.2,-4.1 19.0,4.9 Q11.8,10.3 1.0,7.6Z" fill="#c4ccec"/><circle cx="9.1" cy="4.72" r="3.42" fill="#4a6aa8"/><circle cx="9.1" cy="4.72" r="1.26" fill="#10182a"/><circle cx="9.82" cy="2.92" r="0.81" fill="#cde"/><path d="M1.0,7.6 Q8.2,-4.550000000000001 19.0,4.9" fill="none" stroke="#1a2030" stroke-width="1.62"/><rect x="2" y="6" width="6" height="14" rx="3" fill="#111"/><circle cx="5" cy="10" r="2.2" fill="#f0c000"/><circle cx="5" cy="16" r="2.2" fill="#20d020"/><rect x="11" y="6" width="6" height="14" rx="3" fill="#111"/><circle cx="14" cy="10" r="2.2" fill="#e01010"/><circle cx="14" cy="16" r="2.2" fill="#f0c000"/></svg>
<svg class="a" style="left:152px;top:68px" width="21" height="21" viewBox="0 0 21 21"><path d="M0.0,8.0 Q8.0,-5.0 20.0,5.0 Q12.0,11.0 0.0,8.0Z" fill="#c4ccec"/><circle cx="9.0" cy="4.8" r="3.8" fill="#4a6aa8"/><circle cx="9.0" cy="4.8" r="1.4" fill="#10182a"/><circle cx="9.8" cy="2.8" r="0.9" fill="#cde"/><path d="M0.0,8.0 Q8.0,-5.5 20.0,5.0" fill="none" stroke="#1a2030" stroke-width="1.8"/><path d="M3,14 A7,5 0 0 1 16,10" fill="none" stroke="#50b030" stroke-width="3"/><polygon points="14,6 19,10 13,13" fill="#50b030"/><path d="M17,13 A7,5 0 0 1 4,17" fill="none" stroke="#e8d000" stroke-width="3"/><polygon points="6,20 1,16 7,14" fill="#e8d000"/></svg>
<svg class="a" style="left:178px;top:68px" width="21" height="21" viewBox="0 0 21 21"><path d="M0.0,9.0 Q8.0,-4.0 20.0,6.0 Q12.0,12.0 0.0,9.0Z" fill="#c4ccec"/><circle cx="9.0" cy="5.8" r="3.8" fill="#4a6aa8"/><circle cx="9.0" cy="5.8" r="1.4" fill="#10182a"/><circle cx="9.8" cy="3.8" r="0.9" fill="#cde"/><path d="M0.0,9.0 Q8.0,-4.5 20.0,6.0" fill="none" stroke="#1a2030" stroke-width="1.8"/><path d="M1.5,13 H8.5 M5,9.5 V16.5" stroke="#70e040" stroke-width="2.6"/><path d="M7,19 L11,12" stroke="#222" stroke-width="1.2"/><path d="M10,17 H18" stroke="#e8d400" stroke-width="2.6"/></svg>
<svg class="a" style="left:204px;top:68px" width="21" height="21" viewBox="0 0 21 21"><path d="M0.0,9.0 Q8.0,-4.0 20.0,6.0 Q12.0,12.0 0.0,9.0Z" fill="#c4ccec"/><circle cx="9.0" cy="5.8" r="3.8" fill="#4a6aa8"/><circle cx="9.0" cy="5.8" r="1.4" fill="#10182a"/><circle cx="9.8" cy="3.8" r="0.9" fill="#cde"/><path d="M0.0,9.0 Q8.0,-4.5 20.0,6.0" fill="none" stroke="#1a2030" stroke-width="1.8"/><path d="M7,15 H15 M11,11 V19" stroke="#70e040" stroke-width="2.6"/></svg>
<svg class="a" style="left:230px;top:68px" width="21" height="21" viewBox="0 0 21 21"><path d="M0.0,9.0 Q8.0,-4.0 20.0,6.0 Q12.0,12.0 0.0,9.0Z" fill="#c4ccec"/><circle cx="9.0" cy="5.8" r="3.8" fill="#4a6aa8"/><circle cx="9.0" cy="5.8" r="1.4" fill="#10182a"/><circle cx="9.8" cy="3.8" r="0.9" fill="#cde"/><path d="M0.0,9.0 Q8.0,-4.5 20.0,6.0" fill="none" stroke="#1a2030" stroke-width="1.8"/><path d="M7,12 H15" stroke="#e8d400" stroke-width="2.6"/></svg>
<svg class="a" style="left:274px;top:68px" width="20" height="21" viewBox="0 0 20 21"><path d="M3,10 A7,7 0 0 1 16,6" fill="none" stroke="#3a8ae0" stroke-width="3"/><polygon points="13,2 19,6 13,9" fill="#3a8ae0"/><path d="M17,10 A7,7 0 0 1 4,14" fill="none" stroke="#7ab8f0" stroke-width="3"/><polygon points="7,18 1,14 7,11" fill="#7ab8f0"/></svg>
<svg class="a" style="left:302px;top:68px" width="16" height="21" viewBox="0 0 16 21"><path d="M2.5,4.5 V16.5 A5.5,2.5 0 0 0 13.5,16.5 V4.5" fill="none" stroke="#333" stroke-width="1.1"/><ellipse cx="8" cy="4.5" rx="5.5" ry="2.5" fill="none" stroke="#333" stroke-width="1.1"/></svg>
<svg class="a" style="left:328px;top:68px" width="16" height="21" viewBox="0 0 16 21"><path d="M2.5,4.5 V16.5 A5.5,2.5 0 0 0 13.5,16.5 V4.5" fill="none" stroke="#333" stroke-width="1.1"/><ellipse cx="8" cy="4.5" rx="5.5" ry="2.5" fill="none" stroke="#333" stroke-width="1.1"/></svg>
<svg class="a" style="left:354px;top:68px" width="16" height="21" viewBox="0 0 16 21"><path d="M2.5,4.5 V16.5 A5.5,2.5 0 0 0 13.5,16.5 V4.5" fill="none" stroke="#333" stroke-width="1.1"/><ellipse cx="8" cy="4.5" rx="5.5" ry="2.5" fill="none" stroke="#333" stroke-width="1.1"/></svg>
<svg class="a" style="left:380px;top:68px" width="18" height="21" viewBox="0 0 18 21"><ellipse cx="11" cy="19" rx="5.5" ry="2" fill="#9aa"/><path d="M2.5,4.5 V16.5 A5.5,2.5 0 0 0 13.5,16.5 V4.5" fill="#4a78c8" stroke="#2ad8f0" stroke-width="1.2"/><ellipse cx="8" cy="4.5" rx="5.5" ry="2.5" fill="#4a78c8" stroke="#2ad8f0" stroke-width="1.2"/></svg>
<div class="a" style="left:401px;top:66px;width:24px;height:24px;background:#fbdc7c;border:1px solid #e6b84a"></div>
<svg class="a" style="left:405px;top:68px" width="18" height="21" viewBox="0 0 18 21"><ellipse cx="11" cy="19" rx="5.5" ry="2" fill="#9aa"/><path d="M2.5,4.5 V16.5 A5.5,2.5 0 0 0 13.5,16.5 V4.5" fill="#4a70c0" stroke="#111" stroke-width="1.2"/><ellipse cx="8" cy="4.5" rx="5.5" ry="2.5" fill="#4a70c0" stroke="#111" stroke-width="1.2"/></svg>
<svg class="a" style="left:433px;top:68px" width="18" height="21" viewBox="0 0 18 21"><ellipse cx="11" cy="19" rx="5.5" ry="2" fill="#9aa"/><path d="M2.5,4.5 V16.5 A5.5,2.5 0 0 0 13.5,16.5 V4.5" fill="#d8e4f4" stroke="#30e0f0" stroke-width="1.2"/><ellipse cx="8" cy="4.5" rx="5.5" ry="2.5" fill="#d8e4f4" stroke="#30e0f0" stroke-width="1.2"/></svg>
<svg class="a" style="left:458px;top:68px" width="18" height="21" viewBox="0 0 18 21"><ellipse cx="11" cy="19" rx="5.5" ry="2" fill="#9aa"/><path d="M2.5,4.5 V16.5 A5.5,2.5 0 0 0 13.5,16.5 V4.5" fill="#d0dcf0" stroke="#333" stroke-width="1.1"/><ellipse cx="8" cy="4.5" rx="5.5" ry="2.5" fill="#d0dcf0" stroke="#333" stroke-width="1.1"/></svg>
<svg class="a" style="left:485px;top:68px" width="16" height="21" viewBox="0 0 16 21"><path d="M2.5,4.5 V16.5 A5.5,2.5 0 0 0 13.5,16.5 V4.5" fill="#e8e8e8" stroke="#333" stroke-width="1.1"/><ellipse cx="8" cy="4.5" rx="5.5" ry="2.5" fill="#e8e8e8" stroke="#333" stroke-width="1.1"/><path d="M5,5 L9,12 L6,18 M10,4 L8,11 L11,18" stroke="#333" fill="none" stroke-width="0.8"/></svg>
<svg class="a" style="left:506px;top:68px" width="22" height="21" viewBox="0 0 22 21"><path d="M2.0,3.5 V10.5 A5.0,2.5 0 0 0 12.0,10.5 V3.5" fill="#e0e0e0" stroke="#444" stroke-width="1.1"/><ellipse cx="7" cy="3.5" rx="5.0" ry="2.5" fill="#e0e0e0" stroke="#444" stroke-width="1.1"/><path d="M10.0,8.5 V17.5 A5.0,2.5 0 0 0 20.0,17.5 V8.5" fill="#4a70c0" stroke="#111" stroke-width="1.1"/><ellipse cx="15" cy="8.5" rx="5.0" ry="2.5" fill="#4a70c0" stroke="#111" stroke-width="1.1"/><path d="M12,2 H17 V5" stroke="#2b2" stroke-width="2" fill="none"/><path d="M3,19 H8" stroke="#2b2" stroke-width="2"/></svg>
<svg class="a" style="left:535px;top:68px" width="20" height="21" viewBox="0 0 20 21"><path d="M2.0,4.5 V16.5 A6.0,2.5 0 0 0 14.0,16.5 V4.5" fill="#4a70c0" stroke="#111" stroke-width="1.1"/><ellipse cx="8" cy="4.5" rx="6.0" ry="2.5" fill="#4a70c0" stroke="#111" stroke-width="1.1"/><path d="M11,14 A4,4 0 0 1 18,12" fill="none" stroke="#4a8ad8" stroke-width="2.4"/><path d="M18,16 A4,4 0 0 1 11,18" fill="none" stroke="#4a8ad8" stroke-width="2.4"/></svg>
<svg class="a" style="left:559px;top:68px" width="22" height="21" viewBox="0 0 22 21"><rect x="1" y="3" width="19" height="15" fill="#3a5a90" stroke="#222" stroke-width="0.8"/><path d="M4,16 L15,5" stroke="#c8d0e0" stroke-width="2.6"/><path d="M5,5 L16,16" stroke="#e0e0e0" stroke-width="2.6"/></svg>
<svg class="a" style="left:602px;top:68px" width="21" height="21" viewBox="0 0 21 21"><path d="M2,4 L5,2 H11 L8,4Z M2,4 H8 V10 H2Z M8,4 L11,2 V8 L8,10" fill="#c8c8c8" stroke="#333" stroke-width="0.8"/><path d="M10,4 L13,2 H19 L16,4Z M10,4 H16 V10 H10Z M16,4 L19,2 V8 L16,10" fill="#eee" stroke="#333" stroke-width="0.8"/><path d="M1,16 H9 M5,12 V20" stroke="#70e040" stroke-width="2.6"/><path d="M11,13 L16,19" stroke="#2a70d8" stroke-width="1.8"/><path d="M14,12 A3.2,3.2 0 1 1 17,18" fill="none" stroke="#3a88e8" stroke-width="1.8"/></svg>
<svg class="a" style="left:628px;top:68px" width="21" height="21" viewBox="0 0 21 21"><path d="M2,4 L5,2 H11 L8,4Z M2,4 H8 V10 H2Z M8,4 L11,2 V8 L8,10" fill="#c8c8c8" stroke="#333" stroke-width="0.8"/><path d="M10,4 L13,2 H19 L16,4Z M10,4 H16 V10 H10Z M16,4 L19,2 V8 L16,10" fill="#eee" stroke="#333" stroke-width="0.8"/><rect x="2" y="6" width="6" height="14" rx="3" fill="#111"/><circle cx="5" cy="10" r="2.2" fill="#f0c000"/><circle cx="5" cy="16" r="2.2" fill="#20d020"/><rect x="11" y="6" width="6" height="14" rx="3" fill="#111"/><circle cx="14" cy="10" r="2.2" fill="#e01010"/><circle cx="14" cy="16" r="2.2" fill="#f0c000"/></svg>
<svg class="a" style="left:654px;top:68px" width="21" height="21" viewBox="0 0 21 21"><path d="M2,4 L5,2 H11 L8,4Z M2,4 H8 V10 H2Z M8,4 L11,2 V8 L8,10" fill="#c8c8c8" stroke="#333" stroke-width="0.8"/><path d="M10,4 L13,2 H19 L16,4Z M10,4 H16 V10 H10Z M16,4 L19,2 V8 L16,10" fill="#eee" stroke="#333" stroke-width="0.8"/><path d="M3,14 A7,5 0 0 1 16,10" fill="none" stroke="#50b030" stroke-width="3"/><polygon points="14,6 19,10 13,13" fill="#50b030"/><path d="M17,13 A7,5 0 0 1 4,17" fill="none" stroke="#e8d000" stroke-width="3"/><polygon points="6,20 1,16 7,14" fill="#e8d000"/></svg>
<svg class="a" style="left:680px;top:68px" width="21" height="21" viewBox="0 0 21 21"><path d="M2,4 L5,2 H11 L8,4Z M2,4 H8 V10 H2Z M8,4 L11,2 V8 L8,10" fill="#c8c8c8" stroke="#333" stroke-width="0.8"/><path d="M10,4 L13,2 H19 L16,4Z M10,4 H16 V10 H10Z M16,4 L19,2 V8 L16,10" fill="#eee" stroke="#333" stroke-width="0.8"/><path d="M1.5,14 H8.5 M5,10.5 V17.5" stroke="#70e040" stroke-width="2.6"/><path d="M8,20 L12,13" stroke="#222" stroke-width="1.2"/><path d="M11,18 H19" stroke="#e8d400" stroke-width="2.6"/></svg>
<svg class="a" style="left:711px;top:68px" width="16" height="21" viewBox="0 0 16 21"><ellipse cx="10" cy="19" rx="5.5" ry="2" fill="#9aa"/><path d="M1.5,4.5 V16.5 A5.5,2.5 0 0 0 12.5,16.5 V4.5" fill="#4a70c0" stroke="#111" stroke-width="1.1"/><ellipse cx="7" cy="4.5" rx="5.5" ry="2.5" fill="#4a70c0" stroke="#111" stroke-width="1.1"/><path d="M7,7 V18" stroke="#111" stroke-dasharray="2,2"/></svg>
<svg class="a" style="left:737px;top:68px" width="16" height="21" viewBox="0 0 16 21"><ellipse cx="10" cy="19" rx="5.5" ry="2" fill="#9aa"/><path d="M1.5,4.5 V16.5 A5.5,2.5 0 0 0 12.5,16.5 V4.5" fill="#4a70c0" stroke="#111" stroke-width="1.1"/><ellipse cx="7" cy="4.5" rx="5.5" ry="2.5" fill="#4a70c0" stroke="#111" stroke-width="1.1"/><path d="M6,6 V18 M9,6 V18" stroke="#f0e060" stroke-width="1.5"/></svg>
<svg class="a" style="left:762px;top:68px" width="18" height="21" viewBox="0 0 18 21"><ellipse cx="11" cy="19" rx="6.0" ry="2" fill="#9aa"/><path d="M2.0,4.5 V16.5 A6.0,2.5 0 0 0 14.0,16.5 V4.5" fill="#d8e4f4" stroke="#30e0f0" stroke-width="1.2"/><ellipse cx="8" cy="4.5" rx="6.0" ry="2.5" fill="#d8e4f4" stroke="#30e0f0" stroke-width="1.2"/><path d="M5,12 L8,16 L15,7" fill="none" stroke="#30b030" stroke-width="2.6"/></svg>
<svg class="a" style="left:784px;top:68px" width="21" height="21" viewBox="0 0 21 21"><ellipse cx="14" cy="20" rx="6.0" ry="2" fill="#9aa"/><path d="M5.0,5.5 V17.5 A6.0,2.5 0 0 0 17.0,17.5 V5.5" fill="#d8e4f4" stroke="#30e0f0" stroke-width="1.2"/><ellipse cx="11" cy="5.5" rx="6.0" ry="2.5" fill="#d8e4f4" stroke="#30e0f0" stroke-width="1.2"/><rect x="13" y="1" width="6" height="6" fill="none" stroke="#e09030" stroke-width="1.4"/></svg>
<svg class="a" style="left:813px;top:68px" width="16" height="21" viewBox="0 0 16 21"><path d="M2.5,4.5 V16.5 A5.5,2.5 0 0 0 13.5,16.5 V4.5" fill="none" stroke="#50a0e8" stroke-width="1.1"/><ellipse cx="8" cy="4.5" rx="5.5" ry="2.5" fill="none" stroke="#50a0e8" stroke-width="1.1"/><path d="M5,5 L9,12 L6,18 M10,4 L8,11 L11,18" stroke="#50a0e8" fill="none" stroke-width="0.8"/></svg>
<svg class="a" style="left:837px;top:68px" width="21" height="21" viewBox="0 0 21 21"><path d="M2,6 L11,2 L20,6 L19,13 L11,19 L3,13Z" fill="#2a4a90" stroke="#111" stroke-width="1"/><path d="M2,6 L11,2 L20,6 L11,10Z" fill="#7090d8" stroke="#111" stroke-width="0.8"/><path d="M11,10 L20,6 L19,13 L11,19Z" fill="#1a3070"/></svg>
<svg class="a" style="left:904px;top:68px" width="22" height="22" viewBox="0 0 22 22"><circle cx="10" cy="9" r="6" fill="#b8cce8" stroke="#888" stroke-width="1.4"/><path d="M5,14 L1,19" stroke="#999" stroke-width="2.4"/><rect x="13" y="12" width="7" height="8" fill="#666"/><path d="M1,1h3v3h-3z M17,1h3v3h-3z M1,17h3v3h-3z" fill="#3cb83c"/></svg>
<svg class="a" style="left:930px;top:68px" width="22" height="22" viewBox="0 0 22 22"><rect x="3" y="5" width="16" height="12" fill="#eef" stroke="#111" stroke-width="0.8"/><text x="5" y="15" font-size="9" font-family="Liberation Sans" font-weight="bold" fill="#222">1:1</text><path d="M0,2h4v4h-4z M18,2h4v4h-4z M0,16h4v4h-4z M18,16h4v4h-4z" fill="#3cb83c"/></svg>
<svg class="a" style="left:957px;top:68px" width="20" height="21" viewBox="0 0 20 21"><path d="M4,17 L16,4" stroke="#50b040" stroke-width="2.4"/><polygon points="11,3 18,2 17,9" fill="#50b040"/><circle cx="4" cy="17" r="3" fill="#aaa" stroke="#555" stroke-width="0.6"/></svg>
<svg class="a" style="left:983px;top:68px" width="20" height="21" viewBox="0 0 20 21"><path d="M3,11 A7,7 0 0 1 16,6" fill="none" stroke="#3aa83a" stroke-width="3"/><polygon points="13,2 19,6 13,9" fill="#3aa83a"/><path d="M17,10 A7,7 0 0 1 4,15" fill="none" stroke="#3aa83a" stroke-width="3"/><polygon points="7,19 1,15 7,12" fill="#3aa83a"/></svg>
<svg class="a" style="left:1008px;top:68px" width="22" height="22" viewBox="0 0 22 22"><path d="M0.0,8.4 Q8.8,-5.9 22.0,5.1 Q13.2,11.700000000000001 0.0,8.4Z" fill="#c4ccec"/><circle cx="9.9" cy="4.88" r="4.18" fill="#4a6aa8"/><circle cx="9.9" cy="4.88" r="1.54" fill="#10182a"/><circle cx="10.78" cy="2.6799999999999997" r="0.9900000000000001" fill="#cde"/><path d="M0.0,8.4 Q8.8,-6.450000000000001 22.0,5.1" fill="none" stroke="#1a2030" stroke-width="1.9800000000000002"/><circle cx="11" cy="14" r="6" fill="#f4d050" stroke="#c09020" stroke-width="0.6"/><circle cx="9" cy="13" r="0.9" fill="#222"/><circle cx="13" cy="13" r="0.9" fill="#222"/><path d="M8,16 Q11,18 14,16" stroke="#222" fill="none" stroke-width="0.8"/></svg>
<svg class="a" style="left:1051px;top:68px" width="22" height="22" viewBox="0 0 22 22"><path d="M1,13 L10,8 L20,12 L11,18Z" fill="#dfe6f6" stroke="#888" stroke-width="0.7"/><path d="M6,14 V2" stroke="#2a7ae8" stroke-width="2"/><polygon points="3,4 6,0 9,4" fill="#2a7ae8"/><path d="M6,14 L16,8" stroke="#3ab83a" stroke-width="1.6"/><path d="M6,14 L14,20" stroke="#e02020" stroke-width="1.6"/><circle cx="6" cy="14" r="2" fill="#777"/></svg>
<svg class="a" style="left:1077px;top:68px" width="22" height="22" viewBox="0 0 22 22"><path d="M9,10 L14,6 L21,9 L16,13Z" fill="#dfe6f6" stroke="#888" stroke-width="0.7"/><path d="M13,9 V1" stroke="#2a7ae8" stroke-width="1.6"/><path d="M2,20 L10,12" stroke="#40a030" stroke-width="3"/><polygon points="6,11 12,10 11,16" fill="#40a030"/><rect x="11" y="14" width="9" height="5" fill="none" stroke="#777"/><circle cx="3" cy="19" r="2.5" fill="#888"/></svg>
<svg class="a" style="left:1104px;top:68px" width="22" height="22" viewBox="0 0 22 22"><path d="M9,10 L14,5 L21,8 L16,13Z" fill="#dfe6f6" stroke="#888" stroke-width="0.7"/><path d="M13,8 V1" stroke="#2a7ae8" stroke-width="1.6"/><path d="M1,19 L10,10" stroke="#40a030" stroke-width="2.6"/><path d="M3,12 L10,19" stroke="#40a030" stroke-width="2.6"/></svg>
<svg class="a" style="left:1146px;top:68px" width="22" height="22" viewBox="0 0 22 22"><rect x="1" y="1" width="6" height="6" fill="#20c0f0"/><rect x="8" y="1" width="6" height="6" fill="#f0d000"/><rect x="15" y="1" width="6" height="6" fill="#20d020"/><rect x="1" y="8" width="6" height="6" fill="#f08000"/><rect x="8" y="8" width="6" height="6" fill="#a06000"/><rect x="15" y="8" width="6" height="6" fill="#f010f0"/><rect x="1" y="15" width="6" height="6" fill="#0010e0"/><rect x="8" y="15" width="6" height="6" fill="#10a010"/><rect x="15" y="15" width="6" height="6" fill="#808080"/></svg>
<svg class="a" style="left:1174px;top:68px" width="18" height="22" viewBox="0 0 18 22"><rect x="1" y="1" width="16" height="19" fill="#e8f0f8" stroke="#555" stroke-width="0.8"/><rect x="3" y="3" width="12" height="2" fill="#f0c060"/><rect x="4" y="9" width="3" height="3" fill="#e03030"/><rect x="8" y="9" width="3" height="3" fill="#30b030"/><rect x="12" y="9" width="3" height="3" fill="#f0d000"/><rect x="4" y="13" width="3" height="3" fill="#f08000"/><rect x="8" y="13" width="3" height="3" fill="#3050e0"/><rect x="12" y="13" width="3" height="3" fill="#f010f0"/></svg>
<svg class="a" style="left:1199px;top:68px" width="22" height="22" viewBox="0 0 22 22"><circle cx="10.5" cy="10.5" r="10" fill="#5a9a4a"/><circle cx="10.5" cy="10.5" r="7.5" fill="#8aa888"/><path d="M5,16 L16,5" stroke="#e8e8e8" stroke-width="2.6"/><path d="M5,5 L16,16" stroke="#ccc" stroke-width="2.6"/></svg>
<svg class="a" style="left:1224px;top:68px" width="22" height="22" viewBox="0 0 22 22"><rect x="1" y="1" width="20" height="19" fill="#e8eef8" stroke="#345" stroke-width="0.8"/><rect x="1" y="1" width="20" height="3" fill="#3a6ab0"/><path d="M6,17 L17,7" stroke="#445" stroke-width="2"/><path d="M6,7 L17,17" stroke="#667" stroke-width="2"/><rect x="3" y="6" width="2" height="10" fill="#c8a050"/></svg>
<svg class="a" style="left:1250px;top:68px" width="22" height="22" viewBox="0 0 22 22"><rect x="2" y="2" width="18" height="17" fill="none" stroke="#223" stroke-width="1.4" stroke-dasharray="1.5,2"/><path d="M8,10 Q14,2 20,6 L16,12Z" fill="#f0c070" stroke="#a07030" stroke-width="0.6"/><circle cx="6" cy="15" r="3" fill="#f0e040" stroke="#3060d0"/></svg>
<svg class="a" style="left:1277px;top:68px" width="22" height="22" viewBox="0 0 22 22"><path d="M4,3 L21,2 L18,19 L1,19Z" fill="#3a64c8" stroke="#203060" stroke-width="0.8"/><path d="M6,6 L18,5 M5,10 L17,9 M4,14 L16,13 M9,3 L6,19 M13,3 L10,19 M17,3 L14,19" stroke="#e05050" stroke-width="0.8"/></svg>
<div class="a" style="left:1px;top:121px;width:58px;height:3px;background:repeating-linear-gradient(to right,#fff 0 2px,#9aa0ad 2px 3px,transparent 3px 4px)"></div>
<div class="a" style="left:1px;top:375px;width:58px;height:3px;background:repeating-linear-gradient(to right,#fff 0 2px,#9aa0ad 2px 3px,transparent 3px 4px)"></div>
<svg class="a" style="left:8px;top:134px" width="21" height="21" viewBox="0 0 21 21"><circle cx="10" cy="9" r="6" fill="#bcd0ea" stroke="#8aa0c0" stroke-width="1.4"/><path d="M6,13 L2,18" stroke="#aaa" stroke-width="2.5"/><path d="M1,5 h4 M1,9 h3" stroke="#bbb" stroke-width="1.5"/></svg>
<svg class="a" style="left:33px;top:134px" width="21" height="21" viewBox="0 0 21 21"><path d="M1,2 L18,18 M5,2 L19,15" stroke="#3a8ae0" stroke-width="1.6" stroke-dasharray="3,2"/><path d="M3,17 L15,4" stroke="#d8a030" stroke-width="3.2"/><path d="M15,4 l2,-2" stroke="#d03030" stroke-width="3"/><polygon points="14,0 20,0 17,3" fill="#000"/></svg>
<svg class="a" style="left:8px;top:160px" width="21" height="21" viewBox="0 0 21 21"><rect x="3" y="4" width="13" height="11" fill="#dfe8f8" stroke="#666" stroke-width="1"/><path d="M0,1h4v4h-4z M15,1h4v4h-4z M0,14h4v4h-4z M15,14h4v4h-4z" fill="#3cb83c"/></svg>
<svg class="a" style="left:33px;top:160px" width="21" height="21" viewBox="0 0 21 21"><path d="M8,4 Q1,3 2,9 Q3,14 10,12 Q17,11 15,16 Q11,20 7,15" fill="none" stroke="#3a7ae0" stroke-width="1.6"/><path d="M3,17 L15,4" stroke="#d8a030" stroke-width="3"/><polygon points="14,0 20,0 17,3" fill="#000"/></svg>
<svg class="a" style="left:8px;top:186px" width="21" height="21" viewBox="0 0 21 21"><text x="0" y="6" font-size="8" fill="#000">±</text><circle cx="11" cy="8" r="6" fill="#b8cce8" stroke="#888" stroke-width="1.3"/><path d="M6,13 L2,18" stroke="#999" stroke-width="2.4"/><rect x="11" y="11" width="8" height="8" fill="#555"/><polygon points="14,0 20,0 17,3" fill="#000"/></svg>
<svg class="a" style="left:33px;top:186px" width="21" height="21" viewBox="0 0 21 21"><rect x="2" y="3" width="15" height="15" fill="none" stroke="#f0e000" stroke-width="1.8"/><path d="M4,10 L8,15 L16,5" fill="none" stroke="#40c040" stroke-width="3"/><polygon points="14,0 20,0 17,3" fill="#000"/></svg>
<svg class="a" style="left:8px;top:212px" width="21" height="21" viewBox="0 0 21 21"><path d="M1,13 L10,8 L20,12 L11,18Z" fill="#dfe6f6" stroke="#999" stroke-width="0.6"/><path d="M5,14 V2" stroke="#2a7ae8" stroke-width="2"/><path d="M5,14 L15,8" stroke="#3ab83a" stroke-width="1.6"/><path d="M5,14 L14,19" stroke="#e02020" stroke-width="1.8"/><circle cx="5" cy="14" r="2" fill="#888"/><polygon points="14,0 20,0 17,3" fill="#000"/></svg>
<svg class="a" style="left:33px;top:212px" width="21" height="21" viewBox="0 0 21 21"><path d="M3,16 Q2,2 7,8 Q11,16 14,10 Q16,4 18,12" fill="none" stroke="#3a6ad0" stroke-width="1.6"/><path d="M4,17 L15,4" stroke="#d8a030" stroke-width="3"/><polygon points="14,0 20,0 17,3" fill="#000"/></svg>
<svg class="a" style="left:8px;top:238px" width="21" height="21" viewBox="0 0 21 21"><path d="M2,3 H13 L11,6 H2Z" fill="#7aa0e0"/><path d="M2,6 H12 L10,9 H2Z" fill="#c0c8d8"/><ellipse cx="10" cy="15" rx="8" ry="4.5" fill="#c8a070" stroke="#6a4a2a" stroke-width="0.8"/><circle cx="7" cy="16" r="1.6" fill="#2050e0"/><circle cx="11" cy="16" r="1.6" fill="#20b020"/><circle cx="14" cy="14" r="1.6" fill="#e02020"/><path d="M10,12 L18,2" stroke="#a06020" stroke-width="1.8"/><polygon points="14,0 20,0 17,3" fill="#000"/></svg>
<svg class="a" style="left:33px;top:238px" width="21" height="21" viewBox="0 0 21 21"><path d="M5,5 L19,2 L16,17 L1,19Z" fill="#4a8ae8" stroke="#2050a0" stroke-width="0.8"/><path d="M10,3 L8,18 M3,11 L18,9" stroke="#cfe" stroke-width="1.2"/><polygon points="14,0 20,0 17,3" fill="#000"/></svg>
<svg class="a" style="left:8px;top:264px" width="21" height="21" viewBox="0 0 21 21"><path d="M3,10 A7,7 0 0 1 16,6" fill="none" stroke="#5a9ae0" stroke-width="3"/><polygon points="13,2 19,6 13,9" fill="#5a9ae0"/><path d="M17,10 A7,7 0 0 1 4,14" fill="none" stroke="#7ab0e8" stroke-width="3"/><polygon points="7,18 1,14 7,11" fill="#7ab0e8"/><polygon points="14,0 20,0 17,3" fill="#000"/></svg>
<svg class="a" style="left:33px;top:264px" width="21" height="21" viewBox="0 0 21 21"><path d="M2,6 L10,2 L18,6 L18,15 L10,19 L2,15Z" fill="#8a8c88" stroke="#333" stroke-width="0.8"/><path d="M2,6 L10,10 L18,6 L10,2Z" fill="#d8d8d8"/><path d="M10,10 V19 L18,15 V6Z" fill="#555"/><polygon points="14,0 20,0 17,3" fill="#000"/></svg>
<svg class="a" style="left:8px;top:290px" width="21" height="21" viewBox="0 0 21 21"><path d="M5,6 Q5,2 10,2 Q15,2 15,6 Q15,9 11,11 V13" fill="none" stroke="#4a7ad0" stroke-width="2.6"/><circle cx="11" cy="17" r="1.6" fill="#4a7ad0"/><ellipse cx="11" cy="19" rx="7" ry="1.5" fill="#999" opacity="0.6"/><polygon points="14,0 20,0 17,3" fill="#000"/></svg>
<svg class="a" style="left:33px;top:290px" width="21" height="21" viewBox="0 0 21 21"><path d="M2,4 V19 M18,4 V19" stroke="#555" stroke-width="1.5"/><path d="M3,6 H17" stroke="#e8d800" stroke-width="2"/><polygon points="3,6 7,3 7,9" fill="#e8d800"/><polygon points="17,6 13,3 13,9" fill="#e8d800"/><polygon points="14,0 20,0 17,3" fill="#000"/></svg>
<svg class="a" style="left:8px;top:316px" width="21" height="21" viewBox="0 0 21 21"><path d="M3,6 H17 L15,19 H5Z" fill="#b8d4f0" stroke="#6a8ab0" stroke-width="1"/><ellipse cx="10" cy="6" rx="7" ry="2" fill="#dde" stroke="#6a8ab0"/><rect x="8" y="1" width="4" height="4" fill="#f0d000"/><path d="M7,9 L13,16 M13,9 L7,16" stroke="#e8e860" stroke-width="1.2"/><polygon points="14,0 20,0 17,3" fill="#000"/></svg>
<svg class="a" style="left:33px;top:316px" width="21" height="21" viewBox="0 0 21 21"><path d="M10,3 L4,9 L10,14 V11 Q16,11 15,18 Q20,6 10,7Z" fill="#a0a0a0" stroke="#888" stroke-width="0.5"/><polygon points="14,0 20,0 17,3" fill="#000"/></svg>
<svg class="a" style="left:8px;top:342px" width="21" height="21" viewBox="0 0 21 21"><rect x="1" y="1" width="4" height="17" fill="#607080"/><circle cx="11" cy="9" r="6" fill="none" stroke="#8a4a20" stroke-width="1.2"/><path d="M11,1 V17 M3,9 H19 M5,3 L17,15 M17,3 L5,15" stroke="#8a4a20" stroke-width="1"/><circle cx="11" cy="9" r="2" fill="#f0b000"/><path d="M1,17 L10,13 L18,15 L9,19Z" fill="#f08010"/><polygon points="14,0 20,0 17,3" fill="#000"/></svg>
<svg class="a" style="left:33px;top:342px" width="21" height="21" viewBox="0 0 21 21"><path d="M2,9 L8,6 H18 L14,15 H3Z" fill="#f3d070" stroke="#b09040" stroke-width="0.6"/><path d="M8,8 Q10,2 16,3" fill="none" stroke="#2aa02a" stroke-width="3"/><rect x="4" y="12" width="15" height="8" fill="#e8f0f8" stroke="#222" stroke-width="1"/></svg>
<svg class="a" style="left:64px;top:113px" width="24" height="24" viewBox="0 0 24 24"><rect width="24" height="24" fill="#7d7f92"/><rect x="3" y="4" width="18" height="3" fill="#3a5488"/><rect x="3" y="10" width="18" height="3" fill="#3a5488"/><rect x="3" y="16" width="18" height="3" fill="#3a5488"/></svg>
<svg class="a" style="left:92px;top:113px" width="24" height="24" viewBox="0 0 24 24"><rect width="24" height="24" fill="#7d7f92"/><rect x="6" y="6" width="12" height="11" fill="#e8eefc" stroke="#555" stroke-width="0.8"/><path d="M2,2h4v4h-4z M18,2h4v4h-4z M2,17h4v4h-4z M18,17h4v4h-4z" fill="#30c030"/></svg>
<svg class="a" style="left:120px;top:113px" width="24" height="24" viewBox="0 0 24 24"><rect width="24" height="24" fill="#7d7f92"/><circle cx="14" cy="11" r="6" fill="#b8d0ee" stroke="#9ab" stroke-width="1.5"/><path d="M10,15 L5,21" stroke="#ccc" stroke-width="2.4"/><path d="M3,7 h6 M3,11 h5 M4,15 h4" stroke="#c8c8d0" stroke-width="1.2"/></svg>
<svg class="a" style="left:148px;top:113px" width="24" height="24" viewBox="0 0 24 24"><rect width="24" height="24" fill="#7d7f92"/><path d="M2,15 L12,9 L22,14 L12,21Z" fill="none" stroke="#666" stroke-width="0.6"/><path d="M11,15 V3" stroke="#2a7ae8" stroke-width="2"/><polygon points="8,5 11,1 14,5" fill="#2a7ae8"/><path d="M11,15 L19,9" stroke="#3ab83a" stroke-width="1.8"/><path d="M11,15 L19,21" stroke="#e02020" stroke-width="2"/><circle cx="11" cy="15" r="2" fill="#ddd"/></svg>
<svg class="a" style="left:176px;top:113px" width="24" height="24" viewBox="0 0 24 24"><rect width="24" height="24" fill="#7d7f92"/><path d="M3,6.5 L12,3 L21,6.5 L12,10Z" fill="#3ed83e"/><path d="M3,6.5 L12,3 L21,6.5 V16.5 L12,21 L3,16.5Z M12,10 V21 M3,6.5 L12,10 L21,6.5 M3,16.5 L12,13 L21,16.5" fill="none" stroke="#000" stroke-width="1.3" stroke-linejoin="round"/></svg>
<svg class="a" style="left:204px;top:113px" width="24" height="24" viewBox="0 0 24 24"><rect width="24" height="24" fill="#7d7f92"/><path d="M3,16.5 L12,13 L21,16.5 L12,21Z" fill="#3ed83e"/><path d="M3,6.5 L12,3 L21,6.5 V16.5 L12,21 L3,16.5Z M12,3 V21 M3,6.5 L12,10 L21,6.5 M3,16.5 L12,13 L21,16.5" fill="none" stroke="#000" stroke-width="1.3" stroke-linejoin="round"/></svg>
<svg class="a" style="left:232px;top:113px" width="24" height="24" viewBox="0 0 24 24"><rect width="24" height="24" fill="#7d7f92"/><path d="M3,6.5 L12,3 V13 L3,16.5Z" fill="#3ed83e"/><path d="M3,6.5 L12,3 L21,6.5 V16.5 L12,21 L3,16.5Z M12,3 V21 M3,6.5 L12,10 L21,6.5 M3,16.5 L12,13 L21,16.5" fill="none" stroke="#000" stroke-width="1.3" stroke-linejoin="round"/></svg>
<svg class="a" style="left:260px;top:113px" width="24" height="24" viewBox="0 0 24 24"><rect width="24" height="24" fill="#7d7f92"/><path d="M12,10 L21,6.5 V16.5 L12,21Z" fill="#3ed83e"/><path d="M3,6.5 L12,3 L21,6.5 V16.5 L12,21 L3,16.5Z M12,3 V21 M3,6.5 L12,10 L21,6.5 M3,16.5 L12,13 L21,16.5" fill="none" stroke="#000" stroke-width="1.3" stroke-linejoin="round"/></svg>
<svg class="a" style="left:288px;top:113px" width="24" height="24" viewBox="0 0 24 24"><rect width="24" height="24" fill="#7d7f92"/><path d="M3,6.5 L12,10 V21 L3,16.5Z" fill="#3ed83e"/><path d="M3,6.5 L12,3 L21,6.5 V16.5 L12,21 L3,16.5Z M12,3 V21 M3,6.5 L12,10 L21,6.5 M3,16.5 L12,13 L21,16.5" fill="none" stroke="#000" stroke-width="1.3" stroke-linejoin="round"/></svg>
<svg class="a" style="left:316px;top:113px" width="24" height="24" viewBox="0 0 24 24"><rect width="24" height="24" fill="#7d7f92"/><path d="M12,3 L21,6.5 V16.5 L12,13Z" fill="#3ed83e"/><path d="M3,6.5 L12,3 L21,6.5 V16.5 L12,21 L3,16.5Z M12,3 V21 M3,6.5 L12,10 L21,6.5 M3,16.5 L12,13 L21,16.5" fill="none" stroke="#000" stroke-width="1.3" stroke-linejoin="round"/></svg>
<svg class="a" style="left:344px;top:113px" width="24" height="24" viewBox="0 0 24 24"><rect width="24" height="24" fill="#7d7f92"/><path d="M3,6.5 L12,3 L21,6.5 V16.5 L12,21 L3,16.5Z" fill="#2ec82e" stroke="#0a8a0a" stroke-width="0.8"/><path d="M3,6.5 L12,3 L21,6.5 L12,10Z" fill="#7aee7a"/><path d="M12,10 L21,6.5 V16.5 L12,21Z" fill="#22b022"/></svg>
<svg class="a" style="left:64px;top:141px" width="24" height="24" viewBox="0 0 24 24"><rect width="24" height="24" fill="#7d7f92"/><path d="M6.5,5.5 V18.5 A5.5,2.5 0 0 0 17.5,18.5 V5.5" fill="none" stroke="#222" stroke-width="1.1"/><ellipse cx="12" cy="5.5" rx="5.5" ry="2.5" fill="none" stroke="#222" stroke-width="1.1"/></svg>
<svg class="a" style="left:64px;top:169px" width="24" height="24" viewBox="0 0 24 24"><rect width="24" height="24" fill="#7d7f92"/><path d="M6.5,5.5 V18.5 A5.5,2.5 0 0 0 17.5,18.5 V5.5" fill="none" stroke="#222" stroke-width="1.1"/><ellipse cx="12" cy="5.5" rx="5.5" ry="2.5" fill="none" stroke="#222" stroke-width="1.1"/></svg>
<svg class="a" style="left:64px;top:197px" width="24" height="24" viewBox="0 0 24 24"><rect width="24" height="24" fill="#a89a60"/><rect x="0.5" y="0.5" width="23" height="23" fill="none" stroke="#e8c860"/><path d="M6.5,5.5 V18.5 A5.5,2.5 0 0 0 17.5,18.5 V5.5" fill="#4a70c0" stroke="#111" stroke-width="1.1"/><ellipse cx="12" cy="5.5" rx="5.5" ry="2.5" fill="#4a70c0" stroke="#111" stroke-width="1.1"/></svg>
<svg class="a" style="left:64px;top:225px" width="24" height="24" viewBox="0 0 24 24"><rect width="24" height="24" fill="#7d7f92"/><path d="M6.5,5.5 V18.5 A5.5,2.5 0 0 0 17.5,18.5 V5.5" fill="#d8e4f4" stroke="#222" stroke-width="1.1"/><ellipse cx="12" cy="5.5" rx="5.5" ry="2.5" fill="#d8e4f4" stroke="#222" stroke-width="1.1"/></svg>
<svg class="a" style="left:64px;top:253px" width="24" height="24" viewBox="0 0 24 24"><rect width="24" height="24" fill="#7d7f92"/><path d="M6.5,5.5 V18.5 A5.5,2.5 0 0 0 17.5,18.5 V5.5" fill="none" stroke="#222" stroke-width="1.1"/><ellipse cx="12" cy="5.5" rx="5.5" ry="2.5" fill="none" stroke="#222" stroke-width="1.1"/><path d="M9,7 L13,14 L10,20 M14,6 L12,13 L15,20" stroke="#222" fill="none" stroke-width="0.8"/></svg>
<svg class="a" style="left:55px;top:850px" width="90" height="100" viewBox="0 0 90 100"><path d="M40,88 L40,68 L58,68 L65,60 L65,86" fill="rgba(200,210,230,0.25)" stroke="#d8d8d8" stroke-width="1"/><path d="M38,90 L47,82 L70,83 L60,91Z" fill="#8a9070" stroke="#e8e000" stroke-width="1"/><text x="58" y="18" font-size="11" font-family="Liberation Sans" fill="#ddd">Z</text><line x1="63" y1="90" x2="63" y2="28" stroke="#20c8d8" stroke-width="2.2"/><polygon points="59,30 63,20 67,30" fill="#20d8e8"/><line x1="63" y1="91" x2="22" y2="88" stroke="#10d010" stroke-width="2.2"/><polygon points="24,84 16,88 24,92" fill="#10d010"/><text x="6" y="94" font-size="11" font-family="Liberation Sans" fill="#e01010">Y</text><line x1="63" y1="91" x2="73" y2="81" stroke="#d01010" stroke-width="3"/><text x="72" y="84" font-size="9" font-family="Liberation Sans" fill="#e01010">X</text><circle cx="63" cy="91" r="3.6" fill="#666"/></svg>
<div class="a" style="left:1337px;top:1003px;width:4px;height:15px;background:repeating-linear-gradient(to bottom,#fff 0 1px,#9aa0ad 1px 2px,transparent 2px 3px)"></div>
<div class="a" style="left:1341px;top:1003px;width:132px;height:15px;background:#fff"></div>
<svg class="a" style="left:1460px;top:1003px" width="14" height="14" viewBox="0 0 14 14"><circle cx="8" cy="6" r="4" fill="none" stroke="#3060b0" stroke-width="1.4"/><path d="M5,9 L1,13" stroke="#3060b0" stroke-width="1.6"/></svg>
<div class="a" style="left:1475px;top:1003px;width:4px;height:15px;background:repeating-linear-gradient(to bottom,#fff 0 1px,#9aa0ad 1px 2px,transparent 2px 3px)"></div>
<div class="a" style="left:1486px;top:1003px;font-size:12.2px;white-space:nowrap">绝对 XY 上视图</div>
<div class="a" style="left:1592px;top:1004px;width:1px;height:14px;background:#a0a0a0"></div>
<div class="a" style="left:1601px;top:1003px;font-size:12.2px;white-space:nowrap">绝对视图</div>
<div class="a" style="left:1657px;top:1003px;width:4px;height:15px;background:repeating-linear-gradient(to bottom,#fff 0 1px,#9aa0ad 1px 2px,transparent 2px 3px)"></div>
<div class="a" style="left:1668px;top:1003px;font-size:12px;font-weight:bold;white-space:nowrap">LAYER0</div>
<div class="a" style="left:1727px;top:1004px;width:1px;height:14px;background:#a0a0a0"></div>
<div class="a" style="left:1757px;top:1004px;width:1px;height:14px;background:#a0a0a0"></div>
<div class="a" style="left:1800px;top:1004px;width:1px;height:14px;background:#a0a0a0"></div>
<div class="a" style="left:1843px;top:1004px;width:1px;height:14px;background:#a0a0a0"></div>
<div class="a" style="left:1887px;top:1004px;width:1px;height:14px;background:#a0a0a0"></div>
<div class="a" style="left:1762px;top:1005px;width:32px;height:12px;background:#46618c"></div>
<div class="a" style="left:1805px;top:1005px;width:32px;height:12px;background:#46618c"></div>
<div class="a" style="left:1848px;top:1005px;width:32px;height:12px;background:#46618c"></div>
<svg class="a" style="left:1894px;top:1002px" width="16" height="16" viewBox="0 0 16 16"><circle cx="8" cy="8" r="7" fill="#1030e0"/><path d="M3,4 Q6,2 8,5 Q6,9 3,9Z M10,9 Q14,6 14,10 Q12,14 9,13Z" fill="#20d020"/><path d="M11,2 Q14,3 15,6" stroke="#fff" stroke-width="0.8" fill="none"/></svg>
<div class="a" style="left:1132px;top:1023px;width:1px;height:15px;background:#a0a0a0"></div>
<div class="a" style="left:1176px;top:1023px;width:1px;height:15px;background:#a0a0a0"></div>
<div class="a" style="left:1207px;top:1023px;width:1px;height:15px;background:#a0a0a0"></div>
<div class="a" style="left:1237px;top:1023px;width:1px;height:15px;background:#a0a0a0"></div>
<div class="a" style="left:1268px;top:1023px;width:1px;height:15px;background:#a0a0a0"></div>
<div class="a" style="left:1299px;top:1023px;width:1px;height:15px;background:#a0a0a0"></div>
<div class="a" style="left:1330px;top:1023px;width:1px;height:15px;background:#a0a0a0"></div>
<div class="a" style="left:1361px;top:1023px;width:1px;height:15px;background:#a0a0a0"></div>
<div class="a" style="left:1392px;top:1023px;width:1px;height:15px;background:#a0a0a0"></div>
<div class="a" style="left:1423px;top:1023px;width:1px;height:15px;background:#a0a0a0"></div>
<div class="a" style="left:1454px;top:1023px;width:1px;height:15px;background:#a0a0a0"></div>
<div class="a" style="left:1580px;top:1023px;width:1px;height:15px;background:#a0a0a0"></div>
<div class="a" style="left:1655px;top:1023px;width:1px;height:15px;background:#a0a0a0"></div>
<div class="a" style="left:1141px;top:1023px;font-size:13px;white-space:nowrap">拴牢</div>
<svg class="a" style="left:1181px;top:1021px" width="18" height="18" viewBox="0 0 18 18"><rect x="0.5" y="0.5" width="17" height="17" fill="#c8ccd8" stroke="#777"/><path d="M3,9 A6,6 0 0 1 14,6" fill="none" stroke="#e04060" stroke-width="2"/><path d="M15,9 A6,6 0 0 1 4,12" fill="none" stroke="#e04060" stroke-width="2"/></svg>
<div class="a" style="left:1211px;top:1021px;width:19px;height:18px;background:#fbdc7c;border:1px solid #e6b84a"></div>
<svg class="a" style="left:1212px;top:1021px" width="18" height="18" viewBox="0 0 18 18"><path d="M2,2 L10,4 L6,10Z" fill="#e040a0"/><path d="M7,7 L15,15" stroke="#f0f0f0" stroke-width="3"/><path d="M7,7 L15,15" stroke="#666" stroke-width="1" fill="none"/></svg>
<svg class="a" style="left:1245px;top:1021px" width="18" height="18" viewBox="0 0 18 18"><path d="M6,4 Q11,0 16,3 L12,9Z" fill="#f0c070" stroke="#a07030" stroke-width="0.6"/><rect x="2" y="8" width="10" height="9" fill="#e8eef8" stroke="#555" stroke-width="0.6"/><circle cx="6" cy="13" r="2" fill="#3060d0"/></svg>
<svg class="a" style="left:1276px;top:1021px" width="18" height="18" viewBox="0 0 18 18"><path d="M4,5 Q4,1 9,1 Q14,1 14,5 Q14,8 10,10 V12" fill="none" stroke="#4a7ad0" stroke-width="2.4"/><circle cx="10" cy="15" r="1.5" fill="#4a7ad0"/></svg>
<svg class="a" style="left:1305px;top:1021px" width="20" height="18" viewBox="0 0 20 18"><path d="M8,1 L14,3 V9 L8,11 L3,9 V3Z" fill="#60a8f0" stroke="#225"/><path d="M11,9 L17,11 V16 L11,18 L6,16 V11Z" fill="#70a0a8" stroke="#111"/><path d="M0,12 H8" stroke="#e01010" stroke-width="2"/><polygon points="7,9 11,12 7,15" fill="#e01010"/></svg>
<div class="a" style="left:1335px;top:1021px;width:20px;height:18px;background:#fbdc7c;border:1px solid #e6b84a"></div>
<svg class="a" style="left:1336px;top:1021px" width="18" height="18" viewBox="0 0 18 18"><path d="M2,5 L9,2 L16,5 L16,14 L9,17 L2,14Z" fill="#88b0a8" stroke="#1040a0" stroke-width="0.8"/><path d="M2,5 L9,8 L16,5 L9,2Z" fill="#e040e0"/><path d="M9,8 V17" stroke="#1040a0"/></svg>
<svg class="a" style="left:1368px;top:1021px" width="14" height="18" viewBox="0 0 14 18"><rect x="2" y="1" width="10" height="16" fill="#e8e8e8" stroke="#666"/><rect x="3" y="6" width="8" height="3" fill="#f0a030"/><path d="M2,5 H12 M2,9 H12 M2,13 H12" stroke="#666"/></svg>
<svg class="a" style="left:1398px;top:1020px" width="20" height="20" viewBox="0 0 20 20"><path d="M10,3 A7,7 0 1 1 3,10" fill="none" stroke="#20a020" stroke-width="2.4"/><polygon points="6,0 12,3 7,7" fill="#20a020"/><circle cx="10" cy="11" r="2" fill="#2040c0"/></svg>
<svg class="a" style="left:1429px;top:1021px" width="18" height="18" viewBox="0 0 18 18"><rect x="1.5" y="1.5" width="15" height="15" fill="none" stroke="#556" stroke-width="1.5"/><path d="M9,1 V17 M1,9 H17" stroke="#556" stroke-width="1.5"/></svg>
<div class="a" style="left:1463px;top:1024px;font-size:12px;white-space:nowrap">LS: 1.00 PS: 1.00</div>
<div class="a" style="left:1589px;top:1023px;font-size:12.5px;white-space:nowrap">单位: 毫米</div>
<div class="a" style="left:1663px;top:1024px;font-size:13px;white-space:nowrap">X = 0331.421 Y = 0148.564 Z = 0000.000</div>
<div class="a" style="left:345px;top:1040px;width:45px;height:8px;background:#6a6258"></div>
<div class="a" style="left:1916px;top:1040px;width:1px;height:8px;background:#8a8070"></div>
<div class="a" style="left:1815px;top:1044px;font-size:13px;color:#e8e8e8;white-space:nowrap;line-height:13px">15:40</div>
<svg class="a" style="left:1728px;top:792px" width="192" height="125" viewBox="0 0 192 125"><defs><linearGradient id="ring" x1="0" y1="0" x2="1" y2="1"><stop offset="0" stop-color="#e04060"/><stop offset="0.5" stop-color="#f0c040"/><stop offset="1" stop-color="#60d060"/></linearGradient></defs><rect x="20" y="2" width="156" height="72" rx="8" fill="#a8d0ea"/><rect x="3" y="7" width="172" height="59" rx="8" fill="#fff" stroke="#1a78c0" stroke-width="2"/><text x="13" y="37" font-size="20" font-weight="bold" fill="#000">中</text><path d="M50,19 A9,9 0 1 1 46,35 A7,7 0 0 0 50,19Z" fill="#000"/><text x="16" y="50" font-size="10" fill="#000">'</text><circle cx="28" cy="58" r="2" fill="none" stroke="#000" stroke-width="1.2"/><path d="M44,47 H63 V53 H58 V62 H49 V53 H44Z" fill="#000"/><rect x="60" y="70" width="115" height="44" rx="22" fill="#1e2538"/><circle cx="85" cy="95" r="26" fill="#2a3248" stroke="#1a1f2e" stroke-width="2"/><circle cx="85" cy="95" r="23" fill="none" stroke="url(#ring)" stroke-width="1.6"/><text x="70" y="101" font-size="19" font-family="Liberation Sans" fill="#e8e8e8">92</text><text x="94" y="101" font-size="8" fill="#e8e8e8">%</text><text x="143" y="85" font-size="10" font-family="Liberation Sans" font-weight="bold" fill="#ddd">0</text><text x="151" y="85" font-size="8" fill="#aaa">K/s</text><text x="143" y="106" font-size="10" font-family="Liberation Sans" font-weight="bold" fill="#ddd">0</text><text x="151" y="106" font-size="8" fill="#aaa">K/s</text><path d="M121,84 V76 M118,79 L121,75 L124,79" stroke="#40a0f0" fill="none" stroke-width="1.2"/><path d="M121,98 V106 M118,103 L121,107 L124,103" stroke="#20c020" fill="none" stroke-width="1.2"/><line x1="110" y1="93" x2="172" y2="93" stroke="#39425a" stroke-width="1"/><path d="M110,50 Q125,36 148,44 Q165,50 172,58 Q186,62 188,70 Q180,74 160,72 Q130,72 110,66Z" fill="#1196e0" stroke="#333" stroke-width="0.6"/><path d="M162,56 Q190,58 190,70 Q176,73 160,70Z" fill="#f4f4f4" stroke="#555" stroke-width="0.5"/><circle cx="165" cy="31" r="4" fill="#e01020"/><circle cx="113" cy="40" r="34" fill="#1196e0" stroke="#333" stroke-width="0.6"/><ellipse cx="106" cy="46" rx="27" ry="26" fill="#f8f8f8" stroke="#555" stroke-width="0.5"/><ellipse cx="105" cy="16" rx="8" ry="9" fill="#fff" stroke="#555" stroke-width="0.5"/><ellipse cx="119" cy="20" rx="9" ry="10" fill="#fff" stroke="#555" stroke-width="0.5"/><circle cx="113" cy="33" r="4" fill="#e01020"/><circle cx="118" cy="22" r="1.5" fill="#000"/><path d="M84,48 Q100,62 125,52" fill="none" stroke="#444" stroke-width="0.7"/><path d="M86,38 L100,42 M86,44 L100,45 M122,42 L138,40 M123,47 L137,50" stroke="#555" stroke-width="0.5"/><ellipse cx="92" cy="60" rx="9" ry="7" fill="#f8f8f8" stroke="#555" stroke-width="0.5"/><ellipse cx="118" cy="70" rx="8" ry="6" fill="#f8f8f8" stroke="#555" stroke-width="0.5"/><circle cx="104" cy="74" r="4" fill="#f0d020" stroke="#806010" stroke-width="0.6"/></svg>
</body></html>
